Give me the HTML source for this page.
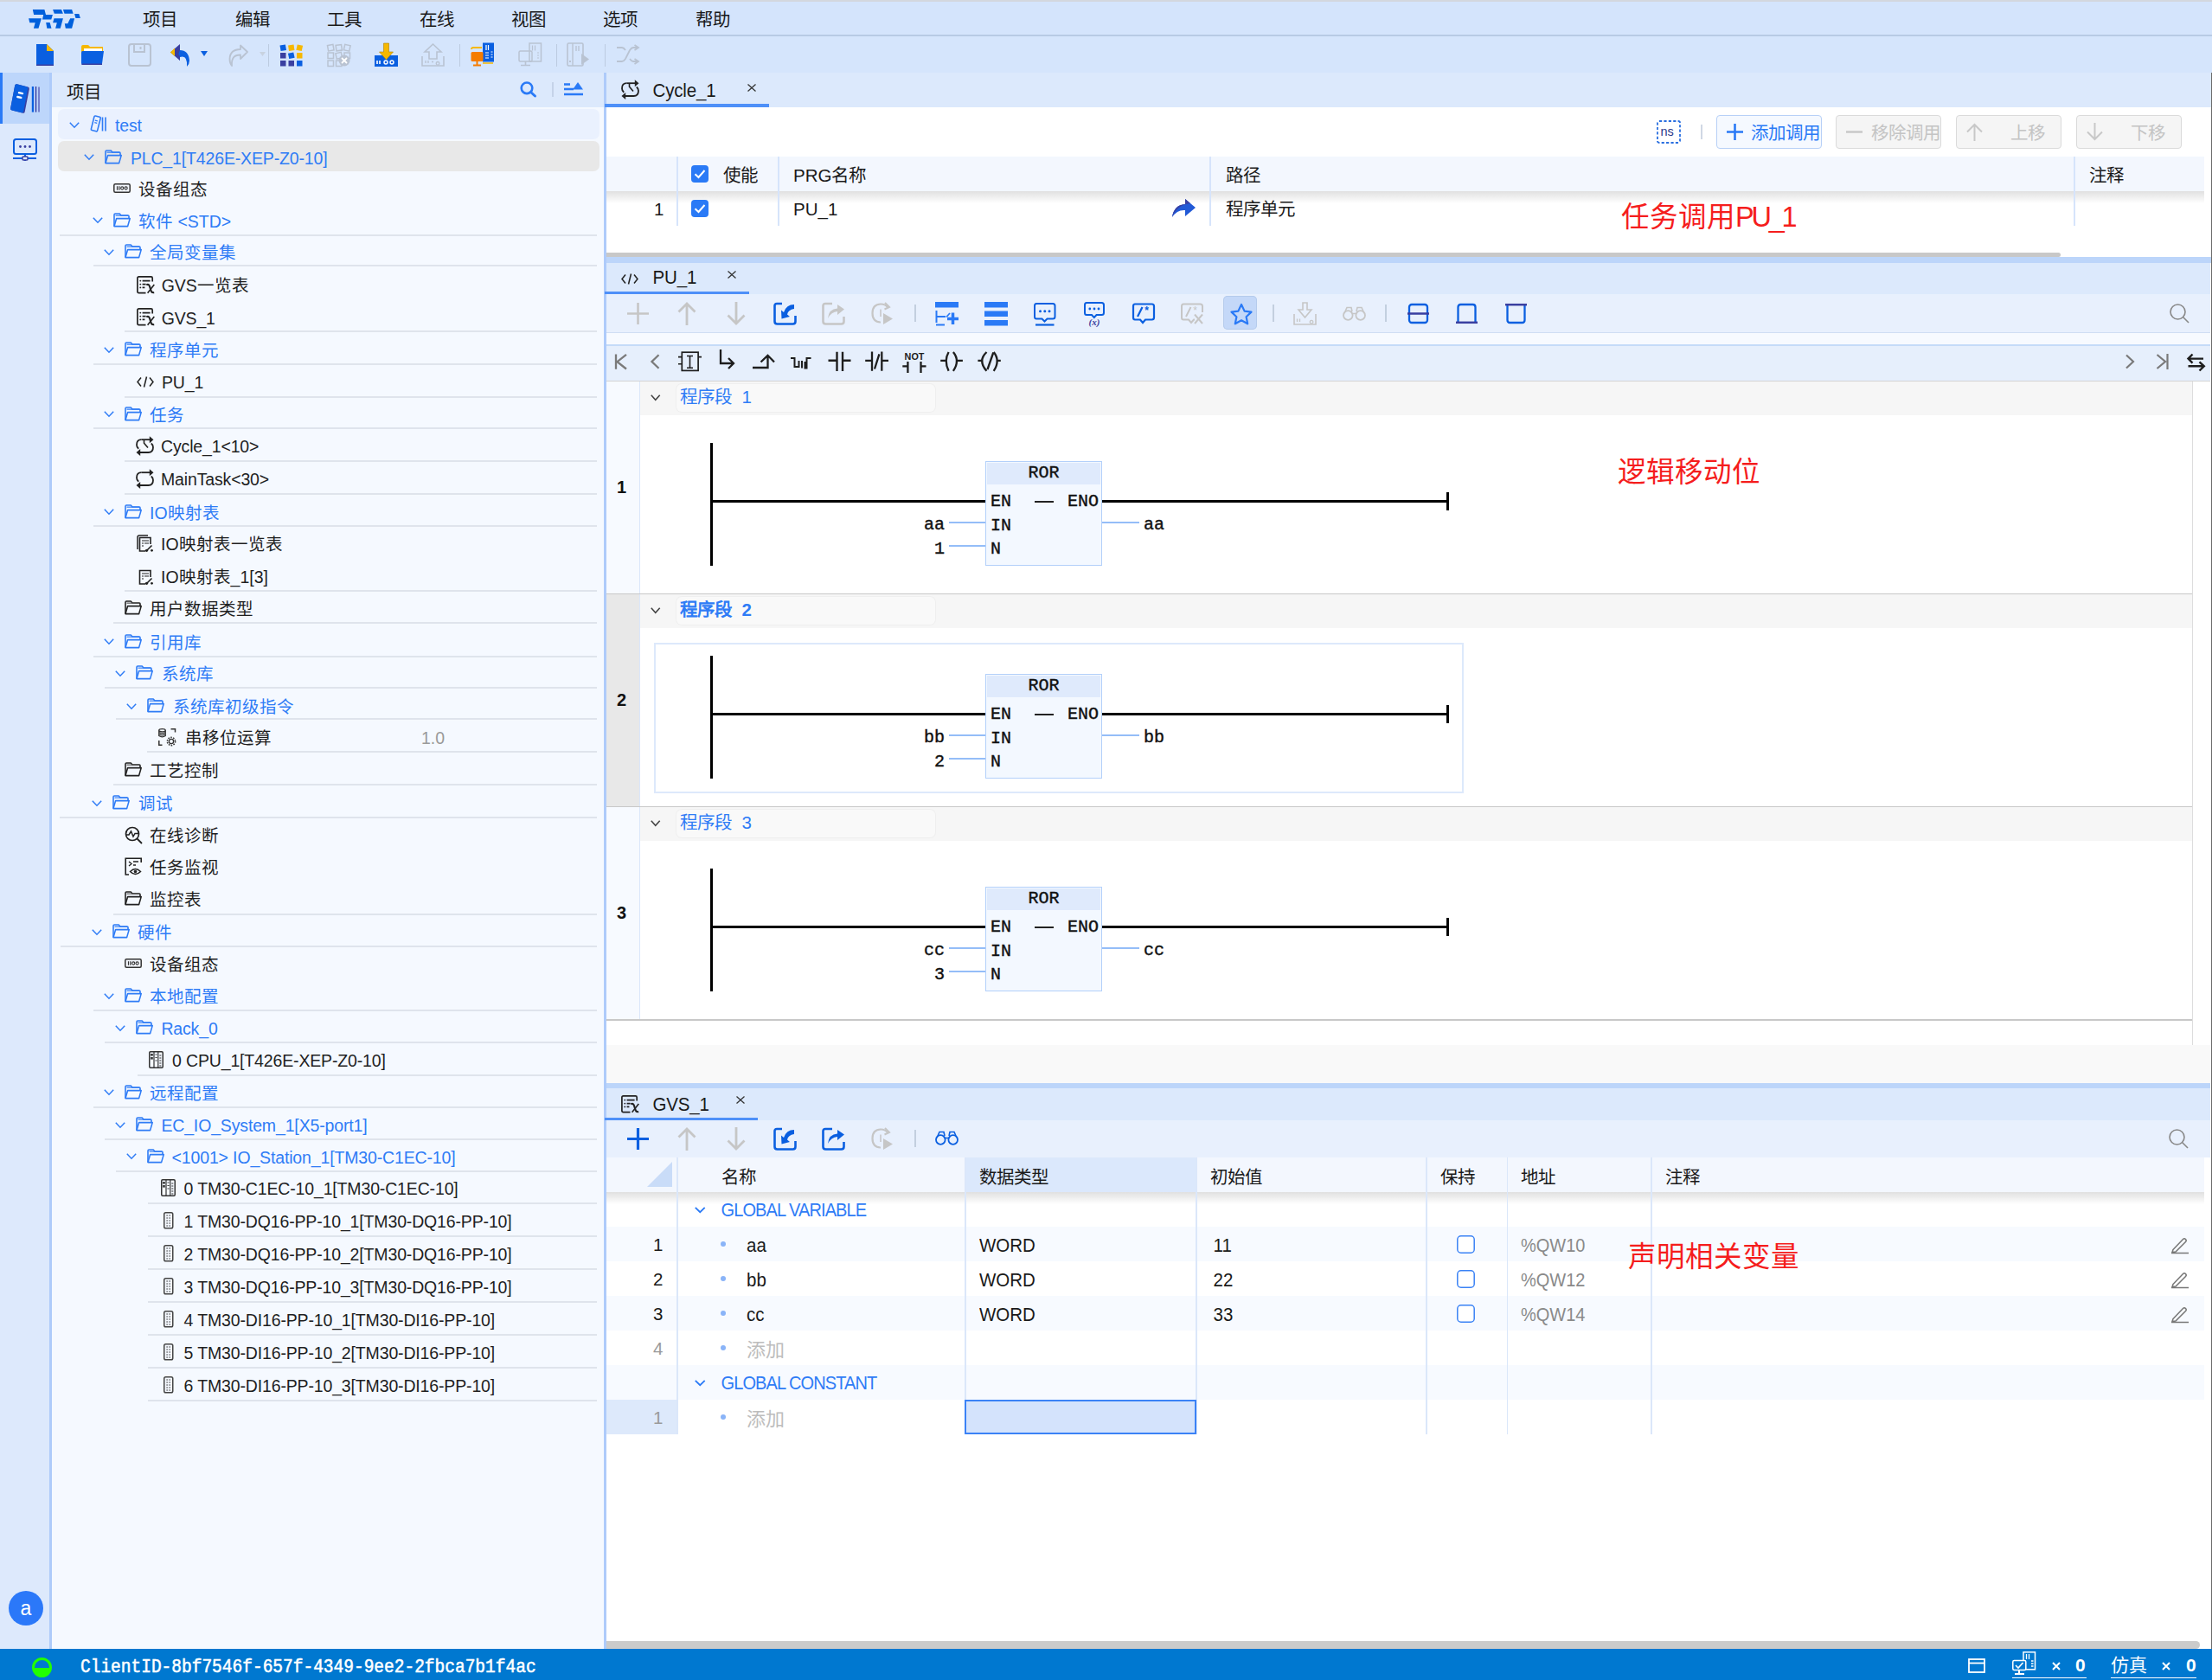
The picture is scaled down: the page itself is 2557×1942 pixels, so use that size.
<!DOCTYPE html>
<html lang="zh-CN">
<head>
<meta charset="utf-8">
<style>
*{box-sizing:border-box;margin:0;padding:0}
html,body{width:2557px;height:1942px;overflow:hidden}
body{position:relative;background:#f5f9ff;font-family:"Liberation Sans",sans-serif;color:#1a1a1a}
.a{position:absolute}
.t{position:absolute;white-space:nowrap;line-height:1}
svg{position:absolute;overflow:visible}
.mono{font-family:"Liberation Mono",monospace}
</style>
</head>
<body>
<div class="a" style="left:0;top:0;width:2557px;height:42px;background:#d4e4fc;border-top:2px solid #d3d7de;border-bottom:2px solid #b8cae4"></div>
<svg style="left:0;top:0" width="100" height="40" viewBox="0 0 100 40"><g fill="#0060dc"><polygon points="37.8,11.1 51.4,11.1 53.0,16.9 60.9,17.1 59.3,22.6 49.0,22.6 50.2,16.9 39.1,16.9"/><polygon points="33.1,21.2 47.9,21.2 44.5,32.7 38.9,32.7 40.7,26.3 34.3,26.3"/><polygon points="53.2,26.1 57.6,26.1 59.5,32.7 54.3,32.7"/><polygon points="61.1,11.1 71.0,11.1 72.9,15.8 62.8,15.8"/><polygon points="62.5,21.2 72.9,21.2 69.8,32.7 64.1,32.7 65.8,26.3 61.1,26.3"/><polygon points="72.9,11.1 83.1,11.1 84.6,15.8 74.5,15.8"/><polygon points="86.1,16.1 91.3,16.1 92.9,20.9 87.5,20.9"/><polygon points="81.2,21.2 86.1,21.2 83.1,32.7 75.8,32.7 74.8,27.2 78.3,27.2"/></g></svg>
<div class="t" style="left:165px;top:13px;font-size:20.5px;color:#1a1a1a">项目</div>
<div class="t" style="left:272px;top:13px;font-size:20.5px;color:#1a1a1a">编辑</div>
<div class="t" style="left:378px;top:13px;font-size:20.5px;color:#1a1a1a">工具</div>
<div class="t" style="left:485px;top:13px;font-size:20.5px;color:#1a1a1a">在线</div>
<div class="t" style="left:591px;top:13px;font-size:20.5px;color:#1a1a1a">视图</div>
<div class="t" style="left:697px;top:13px;font-size:20.5px;color:#1a1a1a">选项</div>
<div class="t" style="left:804px;top:13px;font-size:20.5px;color:#1a1a1a">帮助</div>
<div class="a" style="left:0;top:42px;width:2557px;height:42px;background:#d5e5fc"></div>
<svg style="left:41px;top:50px" width="22" height="27" viewBox="0 0 22 27" ><path d="M1 1H13L21 9V26H1Z" fill="#0a5fe0"/><path d="M13 1L21 9H13Z" fill="#f6b800"/><path d="M1 24.5H21V26H1Z" fill="#3a3fa0"/></svg>
<svg style="left:93px;top:51px" width="28" height="25" viewBox="0 0 28 25" ><path d="M1 3Q1 1 3 1H9L11 3H26V10H1Z" fill="#f6b800"/><path d="M4 5H25V9H4Z" fill="#fff"/><path d="M2.5 8H27L25 22.5Q24.7 24 23 24H3Q1 24 1 22V10Q1 8 2.5 8Z" fill="#0a5fe0"/><path d="M1.5 22.5H25V24H1.5Z" fill="#3a3fa0"/></svg>
<svg style="left:148px;top:50px" width="27" height="27" viewBox="0 0 27 27" ><rect x="1" y="1" width="25" height="25" rx="3" fill="none" stroke="#b9c3d2" stroke-width="2"/><path d="M7 1.5V10H19V1.5" fill="none" stroke="#b9c3d2" stroke-width="2"/><path d="M14.5 4V7" stroke="#b9c3d2" stroke-width="2"/></svg>
<svg style="left:196px;top:50px" width="24" height="27" viewBox="0 0 24 27" ><path d="M7.5 13Q7.5 8 12 8Q22 8 23 20Q23 24 20 27Q21 13 12 16V20Z" fill="#0a5fe0"/><path d="M12 1L1 10.5L12 20V15Q9 13 12 8Z" fill="#3a3fa0"/><path d="M6 5.5L1 10.5L6 15Z" fill="#f6b800"/></svg>
<svg style="left:232px;top:59px" width="8" height="6" viewBox="0 0 8 6" ><path d="M0 0H8L4 6Z" fill="#0a5fe0"/></svg>
<svg style="left:264px;top:51px" width="24" height="26" viewBox="0 0 24 26" ><path d="M22 9L14 1.5V6Q2 6 1.5 17Q1.5 22 4 25Q3 12 14 12.5V17Z" fill="none" stroke="#b9c3d2" stroke-width="1.8" stroke-linejoin="round"/></svg>
<svg style="left:300px;top:60px" width="7" height="5" viewBox="0 0 7 5" ><path d="M0 0H7L3.5 5Z" fill="#c8d2e0"/></svg>
<div class="a" style="left:310px;top:51px;width:1.2px;height:26px;background:#bccbe0;"></div>
<svg style="left:323px;top:50px" width="27" height="27" viewBox="0 0 27 27" ><rect x="1.0" y="2" width="6.5" height="6.5" fill="#0a5fe0" transform="rotate(-10 4.2 5.2)"/><rect x="10.5" y="2" width="6.5" height="6.5" fill="#f6b800" transform="rotate(-8 13.7 5.2)"/><rect x="20.0" y="2" width="6.5" height="6.5" fill="#f6b800" transform="rotate(12 23.2 5.2)"/><rect x="1.0" y="11" width="6.5" height="6.5" fill="#3a3fa0" transform="rotate(0 4.2 14.2)"/><rect x="10.5" y="11" width="6.5" height="6.5" fill="#0a5fe0" transform="rotate(-12 13.7 14.2)"/><rect x="20.0" y="11" width="6.5" height="6.5" fill="#f6b800" transform="rotate(0 23.2 14.2)"/><rect x="1.0" y="20" width="6.5" height="6.5" fill="#3a3fa0" transform="rotate(0 4.2 23.2)"/><rect x="10.5" y="20" width="6.5" height="6.5" fill="#3a3fa0" transform="rotate(0 13.7 23.2)"/><rect x="20.0" y="20" width="6.5" height="6.5" fill="#0a5fe0" transform="rotate(0 23.2 23.2)"/></svg>
<svg style="left:378px;top:50px" width="27" height="27" viewBox="0 0 27 27" ><rect x="1.0" y="2" width="6.5" height="6.5" fill="none" stroke="#b9c3d2" stroke-width="1.5" transform="rotate(-10 4.2 5.2)"/><rect x="10.5" y="2" width="6.5" height="6.5" fill="none" stroke="#b9c3d2" stroke-width="1.5" transform="rotate(-8 13.7 5.2)"/><rect x="20.0" y="2" width="6.5" height="6.5" fill="none" stroke="#b9c3d2" stroke-width="1.5" transform="rotate(12 23.2 5.2)"/><rect x="1.0" y="11" width="6.5" height="6.5" fill="none" stroke="#b9c3d2" stroke-width="1.5" transform="rotate(0 4.2 14.2)"/><rect x="10.5" y="11" width="6.5" height="6.5" fill="none" stroke="#b9c3d2" stroke-width="1.5" transform="rotate(-12 13.7 14.2)"/><rect x="20.0" y="11" width="6.5" height="6.5" fill="none" stroke="#b9c3d2" stroke-width="1.5" transform="rotate(0 23.2 14.2)"/><rect x="1.0" y="20" width="6.5" height="6.5" fill="none" stroke="#b9c3d2" stroke-width="1.5" transform="rotate(0 4.2 23.2)"/><rect x="10.5" y="20" width="6.5" height="6.5" fill="none" stroke="#b9c3d2" stroke-width="1.5" transform="rotate(0 13.7 23.2)"/><circle cx="20" cy="20" r="6.5" fill="#b9c3d2"/><path d="M17 17L23 23M23 17L17 23" stroke="#fff" stroke-width="1.8"/></svg>
<svg style="left:433px;top:50px" width="27" height="27" viewBox="0 0 27 27" ><rect x="0" y="14" width="27" height="13" fill="#0a5fe0"/><path d="M3 20v4M6 20v4" stroke="#fff" stroke-width="1.6"/><circle cx="13" cy="22" r="2" fill="none" stroke="#fff" stroke-width="1.4"/><circle cx="20" cy="22" r="2" fill="none" stroke="#fff" stroke-width="1.4"/><path d="M10.5 0H16.5V10H21.5L13.5 19L5.5 10H10.5Z" fill="#f6b800" stroke="#b08000" stroke-width="0.6"/></svg>
<svg style="left:487px;top:50px" width="27" height="27" viewBox="0 0 27 27" ><path d="M1 15V26H26V15" fill="none" stroke="#b9c3d2" stroke-width="1.6"/><path d="M13.5 1L4 10H9V18H18V10H23Z" fill="none" stroke="#b9c3d2" stroke-width="1.6"/><path d="M5 20v3M8 20v3M12 21.5h2M19 21.5a1.8 1.8 0 1 0 .1 0" fill="none" stroke="#b9c3d2" stroke-width="1.3"/></svg>
<div class="a" style="left:531px;top:51px;width:1.2px;height:26px;background:#bccbe0;"></div>
<svg style="left:544px;top:49px" width="28" height="28" viewBox="0 0 28 28" ><rect x="14" y="0.5" width="13" height="22" fill="#0a5fe0"/><path d="M18 3v6M20.5 3v6M23.5 11h2M23.5 14h2M23.5 17h2M17 12h4M17 15h4M17 18h4" stroke="#fff" stroke-width="1.2"/><path d="M1 8Q1 6 3 6H13" fill="none" stroke="#f6b800" stroke-width="1.8"/><rect x="0.5" y="11" width="14" height="11" rx="1.5" fill="#f57c00"/><path d="M7.5 22V26M3 26.5H12" stroke="#f57c00" stroke-width="2"/><path d="M14 24H26" stroke="#f6b800" stroke-width="1.5"/></svg>
<svg style="left:599px;top:49px" width="28" height="28" viewBox="0 0 28 28" ><rect x="13" y="1" width="13.5" height="21" fill="none" stroke="#b9c3d2" stroke-width="1.5"/><path d="M16.5 3.5v6M19.5 3.5v6M22 12h2M22 15h2M22 18h2" stroke="#b9c3d2" stroke-width="1.2"/><rect x="1" y="10" width="15" height="12" rx="1.5" fill="none" stroke="#b9c3d2" stroke-width="1.5"/><path d="M8.5 22V26M3 26.5H14" stroke="#b9c3d2" stroke-width="1.6"/></svg>
<div class="a" style="left:642.5px;top:51px;width:1.2px;height:26px;background:#bccbe0;"></div>
<svg style="left:655px;top:49px" width="27" height="28" viewBox="0 0 27 28" ><rect x="1" y="1" width="18" height="26" rx="1.5" fill="none" stroke="#b9c3d2" stroke-width="1.6"/><path d="M7 1v26" stroke="#b9c3d2" stroke-width="1.4"/><path d="M11 4v6M14 4v6" stroke="#b9c3d2" stroke-width="1.3"/><rect x="3" y="21" width="2" height="2" fill="#b9c3d2"/><path d="M17 13L26 19.5L17 26Z" fill="#b9c3d2"/></svg>
<div class="a" style="left:699px;top:51px;width:1.2px;height:26px;background:#bccbe0;"></div>
<svg style="left:712px;top:52px" width="27" height="22" viewBox="0 0 27 22" ><path d="M1 19H7Q9 19 11 16L16 6Q18 3 20 3H25M1 3H7Q9 3 11 6M16 16Q18 19 20 19H25" fill="none" stroke="#b9c3d2" stroke-width="1.8"/><path d="M21.5 0L26 3L21.5 6M21.5 16L26 19L21.5 22" fill="none" stroke="#b9c3d2" stroke-width="1.8"/></svg>
<div class="a" style="left:0;top:84px;width:57px;height:1822px;background:#dde9fc"></div>
<div class="a" style="left:0;top:84px;width:57px;height:59px;background:#bdd6fb"></div>
<div class="a" style="left:0;top:84px;width:3px;height:59px;background:#2a7af6"></div>
<div class="a" style="left:57px;top:84px;width:3px;height:1822px;background:#aecbfa"></div>
<svg style="left:0;top:0" width="60" height="140" viewBox="0 0 60 140"><path d="M19.5 97.2Q17.6 96.8 17.2 98.8L12.2 125Q11.8 127 13.8 127.5L26.5 130.7Q28.3 131.1 28.7 129.2L33.8 103Q34.2 101 32.3 100.6Z" fill="#3a3fa0"/><path d="M19.5 97.2Q17.6 96.8 17.2 98.8L12.2 125Q11.8 127 13.8 127.5L25 130.3Q26.8 130.7 27.2 128.8L32.2 102.6Q32.6 100.6 30.8 100.2Z" fill="#0a5fe0"/><path d="M22 107.2L26 108.1M20.3 112L24.3 112.9" stroke="#fff" stroke-width="2.4" stroke-linecap="round"/><path d="M37.9 100V129.6" stroke="#0a5fe0" stroke-width="2.2"/><path d="M41.5 100V129.6" stroke="#3a3fa0" stroke-width="1.5"/><path d="M45 100.5V129.6" stroke="#7580cc" stroke-width="2"/></svg>
<svg style="left:15px;top:160px" width="28" height="29" viewBox="0 0 28 29" ><rect x="1" y="1" width="26" height="17" rx="2.5" fill="none" stroke="#0a5fe0" stroke-width="2"/><circle cx="8.5" cy="9.5" r="1.4" fill="#3a3fa0"/><circle cx="14" cy="9.5" r="1.4" fill="#3a3fa0"/><circle cx="19.5" cy="9.5" r="1.4" fill="#3a3fa0"/><path d="M14 18V26M0 23H27" stroke="#0a5fe0" stroke-width="2"/><rect x="11" y="21" width="6" height="4" rx="1" fill="#dde9fc" stroke="#3a3fa0" stroke-width="1.5"/></svg>
<div class="a" style="left:10px;top:1839px;width:40px;height:40px;border-radius:50%;background:#2b78f9"></div>
<div class="t" style="left:10px;top:1848px;width:40px;text-align:center;font-size:23px;color:#fff">a</div>
<div class="a" style="left:60px;top:84px;width:638px;height:40px;background:#dce9fc"></div>
<div class="t" style="left:77px;top:97px;font-size:20.5px">项目</div>
<div class="a" style="left:60px;top:124px;width:638px;height:1782px;background:#f5f9ff"></div>
<div class="a" style="left:698px;top:84px;width:3px;height:1822px;background:#aecbfa"></div>
<svg style="left:601px;top:94px" width="21" height="18" viewBox="0 0 21 18" ><circle cx="8" cy="7.8" r="6.3" fill="none" stroke="#2a7af6" stroke-width="2.6"/><path d="M12.5 12.5L17.5 17" stroke="#2a7af6" stroke-width="3" stroke-linecap="round"/></svg>
<div class="a" style="left:638px;top:95px;width:1.5px;height:17px;background:#c5d3e8;"></div>
<svg style="left:652px;top:94px" width="22" height="18" viewBox="0 0 22 18" ><path d="M0 3.5h7M0 9h11M0 15h22" stroke="#2a7af6" stroke-width="2.4"/><path d="M10 9.5L16 1L22 9.5Z" fill="#2a7af6"/></svg>
<div class="a" style="left:67px;top:126px;width:626px;height:35px;border-radius:7px;background:#eaf1fe"></div>
<div class="a" style="left:67px;top:163px;width:626px;height:35px;border-radius:7px;background:#e8e8e8"></div>
<svg style="left:80px;top:140.5px" width="12" height="7" viewBox="0 0 12 7" ><polyline points="0.8,0.8 6.0,6.2 11.2,0.8" fill="none" stroke="#2f7cf6" stroke-width="1.5"/></svg>
<svg style="left:105px;top:133px" width="19" height="21" viewBox="0 0 19 21" ><g transform="rotate(14 6 10)"><rect x="2" y="1.5" width="7.5" height="17" rx="1.2" fill="none" stroke="#2f7cf6" stroke-width="1.6"/><path d="M4 6.5h3M4 9h3" stroke="#2f7cf6" stroke-width="1.3"/></g><path d="M13.5 2.5V18.5M17 2.5V18.5" stroke="#2f7cf6" stroke-width="1.6"/></svg>
<div class="t" style="left:133px;top:136.0px;font-size:19.5px;color:#2f7cf6;letter-spacing:-0.15px;transform:scaleY(1.08);transform-origin:0 85%">test</div>
<svg style="left:96.6px;top:178.0px" width="12" height="7" viewBox="0 0 12 7" ><polyline points="0.8,0.8 6.0,6.2 11.2,0.8" fill="none" stroke="#2f7cf6" stroke-width="1.5"/></svg>
<svg style="left:120.8px;top:172.5px" width="20" height="17" viewBox="0 0 20 17" ><path d="M1 15.6V2.2Q1 1 2.2 1H7.2L9 3H17Q18 3 18 4V6.2" fill="none" stroke="#2f7cf6" stroke-width="1.6" stroke-linejoin="round"/><path d="M2.5 3.2H17.2" stroke="#2f7cf6" stroke-width="1.6" opacity="0.75"/><path d="M1 15.6L3.6 6.6H19.2L16.6 15.6Z" fill="none" stroke="#2f7cf6" stroke-width="1.6" stroke-linejoin="round"/></svg>
<div class="t" style="left:150.9px;top:173.5px;font-size:19.5px;color:#2f7cf6;letter-spacing:-0.15px;transform:scaleY(1.08);transform-origin:0 85%">PLC_1[T426E-XEP-Z0-10]</div>
<svg style="left:130.5px;top:212px" width="20" height="11" viewBox="0 0 20 11" ><rect x="0.8" y="0.8" width="18.4" height="9.4" rx="1.5" fill="none" stroke="#333" stroke-width="1.5"/><path d="M4.5 3.3v4.4M6.8 3.3v4.4" stroke="#333" stroke-width="1.2"/><circle cx="10.2" cy="5.5" r="1.6" fill="none" stroke="#333" stroke-width="1.1"/><circle cx="14.6" cy="5.5" r="1.6" fill="none" stroke="#333" stroke-width="1.1"/></svg>
<div class="t" style="left:160.4px;top:210.0px;font-size:19.5px;color:#1f1f1f;">设备组态</div>
<svg style="left:106.6px;top:251.2px" width="12" height="7" viewBox="0 0 12 7" ><polyline points="0.8,0.8 6.0,6.2 11.2,0.8" fill="none" stroke="#2f7cf6" stroke-width="1.5"/></svg>
<svg style="left:130.8px;top:245.7px" width="20" height="17" viewBox="0 0 20 17" ><path d="M1 15.6V2.2Q1 1 2.2 1H7.2L9 3H17Q18 3 18 4V6.2" fill="none" stroke="#2f7cf6" stroke-width="1.6" stroke-linejoin="round"/><path d="M2.5 3.2H17.2" stroke="#2f7cf6" stroke-width="1.6" opacity="0.75"/><path d="M1 15.6L3.6 6.6H19.2L16.6 15.6Z" fill="none" stroke="#2f7cf6" stroke-width="1.6" stroke-linejoin="round"/></svg>
<div class="t" style="left:160px;top:246.7px;font-size:19.5px;color:#2f7cf6;">软件 &lt;STD&gt;</div>
<div class="a" style="left:69px;top:271px;width:621px;height:1.5px;background:#dfe4ec"></div>
<svg style="left:119.6px;top:287.5px" width="12" height="7" viewBox="0 0 12 7" ><polyline points="0.8,0.8 6.0,6.2 11.2,0.8" fill="none" stroke="#2f7cf6" stroke-width="1.5"/></svg>
<svg style="left:144px;top:282px" width="20" height="17" viewBox="0 0 20 17" ><path d="M1 15.6V2.2Q1 1 2.2 1H7.2L9 3H17Q18 3 18 4V6.2" fill="none" stroke="#2f7cf6" stroke-width="1.6" stroke-linejoin="round"/><path d="M2.5 3.2H17.2" stroke="#2f7cf6" stroke-width="1.6" opacity="0.75"/><path d="M1 15.6L3.6 6.6H19.2L16.6 15.6Z" fill="none" stroke="#2f7cf6" stroke-width="1.6" stroke-linejoin="round"/></svg>
<div class="t" style="left:173px;top:283.0px;font-size:19.5px;color:#2f7cf6;">全局变量集</div>
<div class="a" style="left:107.6px;top:306px;width:582.4px;height:1.5px;background:#dfe4ec"></div>
<svg style="left:157.6px;top:318.5px" width="20" height="20" viewBox="0 0 20 20" ><path d="M10.5 19.6H2.5Q0.9 19.6 0.9 18V2.5Q0.9 0.9 2.5 0.9H16.6Q18.2 0.9 18.2 2.5V6.6" fill="none" stroke="#222" stroke-width="1.7"/><circle cx="4.3" cy="5.6" r="0.95" fill="#222"/><circle cx="4.3" cy="9.6" r="0.95" fill="#222"/><circle cx="4.3" cy="13.4" r="0.95" fill="#222"/><path d="M6.6 5.6H15.6M6.6 9.6H10.6M6.6 13.4H9.4" stroke="#222" stroke-width="1.6"/><path d="M11.3 10.2Q14 9 14.9 11.8L16.7 17.3Q17.4 19.6 20.2 19.1" fill="none" stroke="#222" stroke-width="2.1"/><path d="M20.3 10L12.6 19.7" stroke="#222" stroke-width="1.6"/></svg>
<div class="t" style="left:186.7px;top:321.0px;font-size:19.5px;color:#1f1f1f;">GVS一览表</div>
<svg style="left:157.6px;top:356.0px" width="20" height="20" viewBox="0 0 20 20" ><path d="M10.5 19.6H2.5Q0.9 19.6 0.9 18V2.5Q0.9 0.9 2.5 0.9H16.6Q18.2 0.9 18.2 2.5V6.6" fill="none" stroke="#222" stroke-width="1.7"/><circle cx="4.3" cy="5.6" r="0.95" fill="#222"/><circle cx="4.3" cy="9.6" r="0.95" fill="#222"/><circle cx="4.3" cy="13.4" r="0.95" fill="#222"/><path d="M6.6 5.6H15.6M6.6 9.6H10.6M6.6 13.4H9.4" stroke="#222" stroke-width="1.6"/><path d="M11.3 10.2Q14 9 14.9 11.8L16.7 17.3Q17.4 19.6 20.2 19.1" fill="none" stroke="#222" stroke-width="2.1"/><path d="M20.3 10L12.6 19.7" stroke="#222" stroke-width="1.6"/></svg>
<div class="t" style="left:186.7px;top:358.5px;font-size:19.5px;color:#1f1f1f;letter-spacing:-0.15px;transform:scaleY(1.08);transform-origin:0 85%">GVS_1</div>
<div class="a" style="left:144px;top:382px;width:546px;height:1.5px;background:#dfe4ec"></div>
<svg style="left:119.6px;top:400.9px" width="12" height="7" viewBox="0 0 12 7" ><polyline points="0.8,0.8 6.0,6.2 11.2,0.8" fill="none" stroke="#2f7cf6" stroke-width="1.5"/></svg>
<svg style="left:144px;top:395.4px" width="20" height="17" viewBox="0 0 20 17" ><path d="M1 15.6V2.2Q1 1 2.2 1H7.2L9 3H17Q18 3 18 4V6.2" fill="none" stroke="#2f7cf6" stroke-width="1.6" stroke-linejoin="round"/><path d="M2.5 3.2H17.2" stroke="#2f7cf6" stroke-width="1.6" opacity="0.75"/><path d="M1 15.6L3.6 6.6H19.2L16.6 15.6Z" fill="none" stroke="#2f7cf6" stroke-width="1.6" stroke-linejoin="round"/></svg>
<div class="t" style="left:173px;top:396.4px;font-size:19.5px;color:#2f7cf6;">程序单元</div>
<div class="a" style="left:107.6px;top:420px;width:582.4px;height:1.5px;background:#dfe4ec"></div>
<svg style="left:157.6px;top:434.5px" width="20" height="13" viewBox="0 0 20 13" ><polyline points="5,1.5 1,6.5 5,11.5" fill="none" stroke="#222" stroke-width="1.5"/><polyline points="15,1.5 19,6.5 15,11.5" fill="none" stroke="#222" stroke-width="1.5"/><path d="M11.5 0.5L8.5 12.5" stroke="#222" stroke-width="1.5"/></svg>
<div class="t" style="left:187px;top:433.0px;font-size:19.5px;color:#1f1f1f;letter-spacing:-0.15px;transform:scaleY(1.08);transform-origin:0 85%">PU_1</div>
<div class="a" style="left:144px;top:458px;width:546px;height:1.5px;background:#dfe4ec"></div>
<svg style="left:119.5px;top:475.1px" width="12" height="7" viewBox="0 0 12 7" ><polyline points="0.8,0.8 6.0,6.2 11.2,0.8" fill="none" stroke="#2f7cf6" stroke-width="1.5"/></svg>
<svg style="left:144px;top:469.6px" width="20" height="17" viewBox="0 0 20 17" ><path d="M1 15.6V2.2Q1 1 2.2 1H7.2L9 3H17Q18 3 18 4V6.2" fill="none" stroke="#2f7cf6" stroke-width="1.6" stroke-linejoin="round"/><path d="M2.5 3.2H17.2" stroke="#2f7cf6" stroke-width="1.6" opacity="0.75"/><path d="M1 15.6L3.6 6.6H19.2L16.6 15.6Z" fill="none" stroke="#2f7cf6" stroke-width="1.6" stroke-linejoin="round"/></svg>
<div class="t" style="left:173px;top:470.6px;font-size:19.5px;color:#2f7cf6;">任务</div>
<div class="a" style="left:108px;top:494px;width:582px;height:1.5px;background:#dfe4ec"></div>
<svg style="left:157px;top:505.5px" width="21" height="21" viewBox="0 0 21 21" ><path d="M6.5 2.2H17" fill="none" stroke="#222" stroke-width="1.8"/><path d="M6.5 2.2Q1 2.2 1 8.2Q1 11 3.2 12.8" fill="none" stroke="#222" stroke-width="1.8"/><path d="M15.8 -1.8L20.5 2.2L15.8 6.2Z" fill="#222"/><path d="M4.5 17H14.5Q20 17 20 11Q20 8.2 17.8 6.5" fill="none" stroke="#222" stroke-width="1.8"/><path d="M5.2 13L0.5 17L5.2 21Z" fill="#222"/><path d="M9.5 3V6.2L14 11.5" fill="none" stroke="#222" stroke-width="1.6"/></svg>
<div class="t" style="left:186px;top:507.0px;font-size:19.5px;color:#1f1f1f;letter-spacing:-0.15px;transform:scaleY(1.08);transform-origin:0 85%">Cycle_1&lt;10&gt;</div>
<div class="a" style="left:144px;top:532px;width:546px;height:1.5px;background:#dfe4ec"></div>
<svg style="left:157px;top:543.5px" width="21" height="21" viewBox="0 0 21 21" ><path d="M6.5 2.2H17" fill="none" stroke="#222" stroke-width="1.8"/><path d="M6.5 2.2Q1 2.2 1 8.2Q1 11 3.2 12.8" fill="none" stroke="#222" stroke-width="1.8"/><path d="M15.8 -1.8L20.5 2.2L15.8 6.2Z" fill="#222"/><path d="M4.5 17H14.5Q20 17 20 11Q20 8.2 17.8 6.5" fill="none" stroke="#222" stroke-width="1.8"/><path d="M5.2 13L0.5 17L5.2 21Z" fill="#222"/></svg>
<div class="t" style="left:186px;top:545.0px;font-size:19.5px;color:#1f1f1f;letter-spacing:-0.15px;transform:scaleY(1.08);transform-origin:0 85%">MainTask&lt;30&gt;</div>
<div class="a" style="left:144px;top:570px;width:546px;height:1.5px;background:#dfe4ec"></div>
<svg style="left:119.5px;top:588.0px" width="12" height="7" viewBox="0 0 12 7" ><polyline points="0.8,0.8 6.0,6.2 11.2,0.8" fill="none" stroke="#2f7cf6" stroke-width="1.5"/></svg>
<svg style="left:144px;top:582.5px" width="20" height="17" viewBox="0 0 20 17" ><path d="M1 15.6V2.2Q1 1 2.2 1H7.2L9 3H17Q18 3 18 4V6.2" fill="none" stroke="#2f7cf6" stroke-width="1.6" stroke-linejoin="round"/><path d="M2.5 3.2H17.2" stroke="#2f7cf6" stroke-width="1.6" opacity="0.75"/><path d="M1 15.6L3.6 6.6H19.2L16.6 15.6Z" fill="none" stroke="#2f7cf6" stroke-width="1.6" stroke-linejoin="round"/></svg>
<div class="t" style="left:173px;top:583.5px;font-size:19.5px;color:#2f7cf6;">IO映射表</div>
<div class="a" style="left:108px;top:607px;width:582px;height:1.5px;background:#dfe4ec"></div>
<svg style="left:158px;top:618px" width="19" height="20" viewBox="0 0 19 20" ><path d="M1 17V3Q1 1 3 1H13" fill="none" stroke="#222" stroke-width="1.5"/><path d="M10 19H3.5V3.5H16V11" fill="none" stroke="#222" stroke-width="1.6"/><path d="M6 7h8M6 10h2M9 10h5M6 13h2" stroke="#222" stroke-width="1.2"/><path d="M17.5 12.5L11.5 18.5" stroke="#222" stroke-width="1.6"/><circle cx="11.5" cy="18.3" r="1.6" fill="#222"/><circle cx="17.5" cy="18.3" r="1.4" fill="#222"/></svg>
<div class="t" style="left:186px;top:620.0px;font-size:19.5px;color:#1f1f1f;">IO映射表一览表</div>
<svg style="left:158px;top:656px" width="19" height="20" viewBox="0 0 19 20" ><path d="M10 19H3.5V3.5H16V11" fill="none" stroke="#222" stroke-width="1.6"/><path d="M6 7h8M6 10h2M9 10h5M6 13h2" stroke="#222" stroke-width="1.2"/><path d="M17.5 12.5L11.5 18.5" stroke="#222" stroke-width="1.6"/><circle cx="11.5" cy="18.3" r="1.6" fill="#222"/><circle cx="17.5" cy="18.3" r="1.4" fill="#222"/></svg>
<div class="t" style="left:186px;top:658.0px;font-size:19.5px;color:#1f1f1f;">IO映射表_1[3]</div>
<div class="a" style="left:144px;top:682px;width:546px;height:1.5px;background:#dfe4ec"></div>
<svg style="left:144px;top:694px" width="20" height="17" viewBox="0 0 20 17" ><path d="M1 15.6V2.2Q1 1 2.2 1H7.2L9 3H17Q18 3 18 4V6.2" fill="none" stroke="#222" stroke-width="1.6" stroke-linejoin="round"/><path d="M2.5 3.2H17.2" stroke="#555" stroke-width="1.6" opacity="0.75"/><path d="M1 15.6L3.6 6.6H19.2L16.6 15.6Z" fill="none" stroke="#222" stroke-width="1.6" stroke-linejoin="round"/></svg>
<div class="t" style="left:173px;top:695.0px;font-size:19.5px;color:#1f1f1f;">用户数据类型</div>
<div class="a" style="left:131px;top:719px;width:559px;height:1.5px;background:#dfe4ec"></div>
<svg style="left:119.5px;top:738.0px" width="12" height="7" viewBox="0 0 12 7" ><polyline points="0.8,0.8 6.0,6.2 11.2,0.8" fill="none" stroke="#2f7cf6" stroke-width="1.5"/></svg>
<svg style="left:144px;top:732.5px" width="20" height="17" viewBox="0 0 20 17" ><path d="M1 15.6V2.2Q1 1 2.2 1H7.2L9 3H17Q18 3 18 4V6.2" fill="none" stroke="#2f7cf6" stroke-width="1.6" stroke-linejoin="round"/><path d="M2.5 3.2H17.2" stroke="#2f7cf6" stroke-width="1.6" opacity="0.75"/><path d="M1 15.6L3.6 6.6H19.2L16.6 15.6Z" fill="none" stroke="#2f7cf6" stroke-width="1.6" stroke-linejoin="round"/></svg>
<div class="t" style="left:173px;top:733.5px;font-size:19.5px;color:#2f7cf6;">引用库</div>
<div class="a" style="left:108px;top:758px;width:582px;height:1.5px;background:#dfe4ec"></div>
<svg style="left:132.6px;top:774.5px" width="12" height="7" viewBox="0 0 12 7" ><polyline points="0.8,0.8 6.0,6.2 11.2,0.8" fill="none" stroke="#2f7cf6" stroke-width="1.5"/></svg>
<svg style="left:157px;top:769px" width="20" height="17" viewBox="0 0 20 17" ><path d="M1 15.6V2.2Q1 1 2.2 1H7.2L9 3H17Q18 3 18 4V6.2" fill="none" stroke="#2f7cf6" stroke-width="1.6" stroke-linejoin="round"/><path d="M2.5 3.2H17.2" stroke="#2f7cf6" stroke-width="1.6" opacity="0.75"/><path d="M1 15.6L3.6 6.6H19.2L16.6 15.6Z" fill="none" stroke="#2f7cf6" stroke-width="1.6" stroke-linejoin="round"/></svg>
<div class="t" style="left:186.6px;top:770.0px;font-size:19.5px;color:#2f7cf6;">系统库</div>
<div class="a" style="left:121px;top:794px;width:569px;height:1.5px;background:#dfe4ec"></div>
<svg style="left:145.7px;top:812.5px" width="12" height="7" viewBox="0 0 12 7" ><polyline points="0.8,0.8 6.0,6.2 11.2,0.8" fill="none" stroke="#2f7cf6" stroke-width="1.5"/></svg>
<svg style="left:170px;top:807px" width="20" height="17" viewBox="0 0 20 17" ><path d="M1 15.6V2.2Q1 1 2.2 1H7.2L9 3H17Q18 3 18 4V6.2" fill="none" stroke="#2f7cf6" stroke-width="1.6" stroke-linejoin="round"/><path d="M2.5 3.2H17.2" stroke="#2f7cf6" stroke-width="1.6" opacity="0.75"/><path d="M1 15.6L3.6 6.6H19.2L16.6 15.6Z" fill="none" stroke="#2f7cf6" stroke-width="1.6" stroke-linejoin="round"/></svg>
<div class="t" style="left:200.4px;top:808.0px;font-size:19.5px;color:#2f7cf6;">系统库初级指令</div>
<div class="a" style="left:134px;top:830px;width:556px;height:1.5px;background:#dfe4ec"></div>
<svg style="left:183px;top:841.5px" width="21" height="21" viewBox="0 0 21 21" ><ellipse cx="4.5" cy="2.2" rx="3.8" ry="1.6" fill="none" stroke="#333" stroke-width="1.2"/><path d="M0.7 2.2V8.6Q4.5 11 8.3 8.6V2.2M0.7 4.4Q4.5 6.8 8.3 4.4M0.7 6.6Q4.5 9 8.3 6.6" fill="none" stroke="#333" stroke-width="1.2"/><path d="M14.5 0.8H19.5V4.5M0.8 14V19.2H4.5" fill="none" stroke="#333" stroke-width="1.5"/><circle cx="15" cy="15" r="2.6" fill="none" stroke="#333" stroke-width="1.3"/><circle cx="15" cy="15" r="4.6" fill="none" stroke="#333" stroke-width="1.6" stroke-dasharray="1.6 1.3"/></svg>
<div class="t" style="left:213.5px;top:844.0px;font-size:19.5px;color:#1f1f1f;">串移位运算</div>
<div class="a" style="left:170px;top:868px;width:520px;height:1.5px;background:#dfe4ec"></div>
<svg style="left:144px;top:881px" width="20" height="17" viewBox="0 0 20 17" ><path d="M1 15.6V2.2Q1 1 2.2 1H7.2L9 3H17Q18 3 18 4V6.2" fill="none" stroke="#222" stroke-width="1.6" stroke-linejoin="round"/><path d="M2.5 3.2H17.2" stroke="#555" stroke-width="1.6" opacity="0.75"/><path d="M1 15.6L3.6 6.6H19.2L16.6 15.6Z" fill="none" stroke="#222" stroke-width="1.6" stroke-linejoin="round"/></svg>
<div class="t" style="left:173px;top:882.0px;font-size:19.5px;color:#1f1f1f;">工艺控制</div>
<div class="a" style="left:131px;top:906px;width:559px;height:1.5px;background:#dfe4ec"></div>
<svg style="left:106px;top:924.5px" width="12" height="7" viewBox="0 0 12 7" ><polyline points="0.8,0.8 6.0,6.2 11.2,0.8" fill="none" stroke="#2f7cf6" stroke-width="1.5"/></svg>
<svg style="left:130px;top:919px" width="20" height="17" viewBox="0 0 20 17" ><path d="M1 15.6V2.2Q1 1 2.2 1H7.2L9 3H17Q18 3 18 4V6.2" fill="none" stroke="#2f7cf6" stroke-width="1.6" stroke-linejoin="round"/><path d="M2.5 3.2H17.2" stroke="#2f7cf6" stroke-width="1.6" opacity="0.75"/><path d="M1 15.6L3.6 6.6H19.2L16.6 15.6Z" fill="none" stroke="#2f7cf6" stroke-width="1.6" stroke-linejoin="round"/></svg>
<div class="t" style="left:160px;top:920.0px;font-size:19.5px;color:#2f7cf6;">调试</div>
<div class="a" style="left:69px;top:944px;width:621px;height:1.5px;background:#dfe4ec"></div>
<svg style="left:143.7px;top:954.5px" width="21" height="21" viewBox="0 0 21 21" ><circle cx="9" cy="9" r="7.5" fill="none" stroke="#222" stroke-width="1.7"/><path d="M14.5 14.5L20 20" stroke="#222" stroke-width="1.8"/><polyline points="1.5,10 5,10 7.5,6 10,12 12,8.5 16.5,8.5" fill="none" stroke="#222" stroke-width="1.5"/></svg>
<div class="t" style="left:173.3px;top:957.0px;font-size:19.5px;color:#1f1f1f;">在线诊断</div>
<svg style="left:143.7px;top:991px" width="21" height="22" viewBox="0 0 21 22" ><path d="M5 20H1.2V1.2H19.2V6M1.2 10V14" fill="none" stroke="#222" stroke-width="1.6"/><path d="M5 5l3 2.5l-3 2.5M10 5h6M10 9h3" fill="none" stroke="#222" stroke-width="1.4"/><path d="M6.5 16.5q6-6 12 0q-6 6-12 0z" fill="none" stroke="#222" stroke-width="1.5"/><circle cx="12.5" cy="16.5" r="1.8" fill="#222"/></svg>
<div class="t" style="left:173.3px;top:994.0px;font-size:19.5px;color:#1f1f1f;">任务监视</div>
<svg style="left:143.7px;top:1030px" width="20" height="17" viewBox="0 0 20 17" ><path d="M1 15.6V2.2Q1 1 2.2 1H7.2L9 3H17Q18 3 18 4V6.2" fill="none" stroke="#222" stroke-width="1.6" stroke-linejoin="round"/><path d="M2.5 3.2H17.2" stroke="#555" stroke-width="1.6" opacity="0.75"/><path d="M1 15.6L3.6 6.6H19.2L16.6 15.6Z" fill="none" stroke="#222" stroke-width="1.6" stroke-linejoin="round"/></svg>
<div class="t" style="left:173.3px;top:1031.0px;font-size:19.5px;color:#1f1f1f;">监控表</div>
<div class="a" style="left:131px;top:1056px;width:559px;height:1.5px;background:#dfe4ec"></div>
<svg style="left:105.7px;top:1073.5px" width="12" height="7" viewBox="0 0 12 7" ><polyline points="0.8,0.8 6.0,6.2 11.2,0.8" fill="none" stroke="#2f7cf6" stroke-width="1.5"/></svg>
<svg style="left:130px;top:1068px" width="20" height="17" viewBox="0 0 20 17" ><path d="M1 15.6V2.2Q1 1 2.2 1H7.2L9 3H17Q18 3 18 4V6.2" fill="none" stroke="#2f7cf6" stroke-width="1.6" stroke-linejoin="round"/><path d="M2.5 3.2H17.2" stroke="#2f7cf6" stroke-width="1.6" opacity="0.75"/><path d="M1 15.6L3.6 6.6H19.2L16.6 15.6Z" fill="none" stroke="#2f7cf6" stroke-width="1.6" stroke-linejoin="round"/></svg>
<div class="t" style="left:159.3px;top:1069.0px;font-size:19.5px;color:#2f7cf6;">硬件</div>
<div class="a" style="left:69.7px;top:1093px;width:620.3px;height:1.5px;background:#dfe4ec"></div>
<svg style="left:144px;top:1108px" width="20" height="11" viewBox="0 0 20 11" ><rect x="0.8" y="0.8" width="18.4" height="9.4" rx="1.5" fill="none" stroke="#333" stroke-width="1.5"/><path d="M4.5 3.3v4.4M6.8 3.3v4.4" stroke="#333" stroke-width="1.2"/><circle cx="10.2" cy="5.5" r="1.6" fill="none" stroke="#333" stroke-width="1.1"/><circle cx="14.6" cy="5.5" r="1.6" fill="none" stroke="#333" stroke-width="1.1"/></svg>
<div class="t" style="left:173.3px;top:1106.0px;font-size:19.5px;color:#1f1f1f;">设备组态</div>
<svg style="left:119.6px;top:1147.5px" width="12" height="7" viewBox="0 0 12 7" ><polyline points="0.8,0.8 6.0,6.2 11.2,0.8" fill="none" stroke="#2f7cf6" stroke-width="1.5"/></svg>
<svg style="left:144px;top:1142px" width="20" height="17" viewBox="0 0 20 17" ><path d="M1 15.6V2.2Q1 1 2.2 1H7.2L9 3H17Q18 3 18 4V6.2" fill="none" stroke="#2f7cf6" stroke-width="1.6" stroke-linejoin="round"/><path d="M2.5 3.2H17.2" stroke="#2f7cf6" stroke-width="1.6" opacity="0.75"/><path d="M1 15.6L3.6 6.6H19.2L16.6 15.6Z" fill="none" stroke="#2f7cf6" stroke-width="1.6" stroke-linejoin="round"/></svg>
<div class="t" style="left:173.3px;top:1143.0px;font-size:19.5px;color:#2f7cf6;">本地配置</div>
<div class="a" style="left:108px;top:1167px;width:582px;height:1.5px;background:#dfe4ec"></div>
<svg style="left:133px;top:1184.5px" width="12" height="7" viewBox="0 0 12 7" ><polyline points="0.8,0.8 6.0,6.2 11.2,0.8" fill="none" stroke="#2f7cf6" stroke-width="1.5"/></svg>
<svg style="left:157px;top:1179px" width="20" height="17" viewBox="0 0 20 17" ><path d="M1 15.6V2.2Q1 1 2.2 1H7.2L9 3H17Q18 3 18 4V6.2" fill="none" stroke="#2f7cf6" stroke-width="1.6" stroke-linejoin="round"/><path d="M2.5 3.2H17.2" stroke="#2f7cf6" stroke-width="1.6" opacity="0.75"/><path d="M1 15.6L3.6 6.6H19.2L16.6 15.6Z" fill="none" stroke="#2f7cf6" stroke-width="1.6" stroke-linejoin="round"/></svg>
<div class="t" style="left:186.4px;top:1180.0px;font-size:19.5px;color:#2f7cf6;letter-spacing:-0.15px;transform:scaleY(1.08);transform-origin:0 85%">Rack_0</div>
<div class="a" style="left:120.5px;top:1204px;width:569.5px;height:1.5px;background:#dfe4ec"></div>
<svg style="left:172px;top:1215px" width="17" height="20" viewBox="0 0 17 20" ><rect x="0.75" y="0.75" width="15.5" height="18.5" rx="1.2" fill="none" stroke="#333" stroke-width="1.5"/><path d="M6 1v18M10.8 1v18" stroke="#333" stroke-width="1.2"/><rect x="2.2" y="3" width="2.6" height="2.6" fill="#333"/><rect x="2.2" y="7" width="2.6" height="2.6" fill="#333"/><path d="M7.5 4h2M7.5 7.5h2M7.5 11h2M12.3 5h2M12.3 8h2M12.3 11h2M12.3 14h2M12.3 17h2" stroke="#333" stroke-width="1.2"/></svg>
<div class="t" style="left:199px;top:1217.0px;font-size:19.5px;color:#1f1f1f;letter-spacing:-0.15px;transform:scaleY(1.08);transform-origin:0 85%">0 CPU_1[T426E-XEP-Z0-10]</div>
<div class="a" style="left:158.5px;top:1242px;width:531.5px;height:1.5px;background:#dfe4ec"></div>
<svg style="left:119.6px;top:1259.1px" width="12" height="7" viewBox="0 0 12 7" ><polyline points="0.8,0.8 6.0,6.2 11.2,0.8" fill="none" stroke="#2f7cf6" stroke-width="1.5"/></svg>
<svg style="left:144px;top:1253.6px" width="20" height="17" viewBox="0 0 20 17" ><path d="M1 15.6V2.2Q1 1 2.2 1H7.2L9 3H17Q18 3 18 4V6.2" fill="none" stroke="#2f7cf6" stroke-width="1.6" stroke-linejoin="round"/><path d="M2.5 3.2H17.2" stroke="#2f7cf6" stroke-width="1.6" opacity="0.75"/><path d="M1 15.6L3.6 6.6H19.2L16.6 15.6Z" fill="none" stroke="#2f7cf6" stroke-width="1.6" stroke-linejoin="round"/></svg>
<div class="t" style="left:173.3px;top:1254.6px;font-size:19.5px;color:#2f7cf6;">远程配置</div>
<div class="a" style="left:108px;top:1279px;width:582px;height:1.5px;background:#dfe4ec"></div>
<svg style="left:133px;top:1296.5px" width="12" height="7" viewBox="0 0 12 7" ><polyline points="0.8,0.8 6.0,6.2 11.2,0.8" fill="none" stroke="#2f7cf6" stroke-width="1.5"/></svg>
<svg style="left:157px;top:1291px" width="20" height="17" viewBox="0 0 20 17" ><path d="M1 15.6V2.2Q1 1 2.2 1H7.2L9 3H17Q18 3 18 4V6.2" fill="none" stroke="#2f7cf6" stroke-width="1.6" stroke-linejoin="round"/><path d="M2.5 3.2H17.2" stroke="#2f7cf6" stroke-width="1.6" opacity="0.75"/><path d="M1 15.6L3.6 6.6H19.2L16.6 15.6Z" fill="none" stroke="#2f7cf6" stroke-width="1.6" stroke-linejoin="round"/></svg>
<div class="t" style="left:186.4px;top:1292.0px;font-size:19.5px;color:#2f7cf6;letter-spacing:-0.15px;transform:scaleY(1.08);transform-origin:0 85%">EC_IO_System_1[X5-port1]</div>
<div class="a" style="left:120.5px;top:1316px;width:569.5px;height:1.5px;background:#dfe4ec"></div>
<svg style="left:145.8px;top:1333.1px" width="12" height="7" viewBox="0 0 12 7" ><polyline points="0.8,0.8 6.0,6.2 11.2,0.8" fill="none" stroke="#2f7cf6" stroke-width="1.5"/></svg>
<svg style="left:170px;top:1327.6px" width="20" height="17" viewBox="0 0 20 17" ><path d="M1 15.6V2.2Q1 1 2.2 1H7.2L9 3H17Q18 3 18 4V6.2" fill="none" stroke="#2f7cf6" stroke-width="1.6" stroke-linejoin="round"/><path d="M2.5 3.2H17.2" stroke="#2f7cf6" stroke-width="1.6" opacity="0.75"/><path d="M1 15.6L3.6 6.6H19.2L16.6 15.6Z" fill="none" stroke="#2f7cf6" stroke-width="1.6" stroke-linejoin="round"/></svg>
<div class="t" style="left:198.6px;top:1328.6px;font-size:19.5px;color:#2f7cf6;letter-spacing:-0.15px;transform:scaleY(1.08);transform-origin:0 85%">&lt;1001&gt; IO_Station_1[TM30-C1EC-10]</div>
<div class="a" style="left:134.4px;top:1353px;width:555.6px;height:1.5px;background:#dfe4ec"></div>
<svg style="left:186px;top:1363px" width="17" height="20" viewBox="0 0 17 20" ><rect x="0.75" y="0.75" width="15.5" height="18.5" rx="1.2" fill="none" stroke="#333" stroke-width="1.5"/><path d="M6 1v18M10.8 1v18" stroke="#333" stroke-width="1.2"/><rect x="2.2" y="3" width="2.6" height="2.6" fill="#333"/><rect x="2.2" y="7" width="2.6" height="2.6" fill="#333"/><path d="M7.5 4h2M7.5 7.5h2M7.5 11h2M12.3 5h2M12.3 8h2M12.3 11h2M12.3 14h2M12.3 17h2" stroke="#333" stroke-width="1.2"/></svg>
<div class="t" style="left:212.6px;top:1365.0px;font-size:19.5px;color:#1f1f1f;letter-spacing:-0.15px;transform:scaleY(1.08);transform-origin:0 85%">0 TM30-C1EC-10_1[TM30-C1EC-10]</div>
<div class="a" style="left:171px;top:1390px;width:519px;height:1.5px;background:#dfe4ec"></div>
<svg style="left:188.5px;top:1401px" width="12" height="20" viewBox="0 0 12 20" ><rect x="0.75" y="0.75" width="10" height="18" rx="1.8" fill="none" stroke="#444" stroke-width="1.5"/><path d="M3.3 4h1.8M6.3 4h1.8M3.3 7h1.8M6.3 7h1.8M3.3 10h1.8M6.3 10h1.8M3.3 13h1.8M6.3 13h1.8M3.3 16h1.8M6.3 16h1.8" stroke="#444" stroke-width="1"/></svg>
<div class="t" style="left:212.6px;top:1403.0px;font-size:19.5px;color:#1f1f1f;letter-spacing:-0.15px;transform:scaleY(1.08);transform-origin:0 85%">1 TM30-DQ16-PP-10_1[TM30-DQ16-PP-10]</div>
<div class="a" style="left:171px;top:1428px;width:519px;height:1.5px;background:#dfe4ec"></div>
<svg style="left:188.5px;top:1439px" width="12" height="20" viewBox="0 0 12 20" ><rect x="0.75" y="0.75" width="10" height="18" rx="1.8" fill="none" stroke="#444" stroke-width="1.5"/><path d="M3.3 4h1.8M6.3 4h1.8M3.3 7h1.8M6.3 7h1.8M3.3 10h1.8M6.3 10h1.8M3.3 13h1.8M6.3 13h1.8M3.3 16h1.8M6.3 16h1.8" stroke="#444" stroke-width="1"/></svg>
<div class="t" style="left:212.6px;top:1441.0px;font-size:19.5px;color:#1f1f1f;letter-spacing:-0.15px;transform:scaleY(1.08);transform-origin:0 85%">2 TM30-DQ16-PP-10_2[TM30-DQ16-PP-10]</div>
<div class="a" style="left:171px;top:1466px;width:519px;height:1.5px;background:#dfe4ec"></div>
<svg style="left:188.5px;top:1477px" width="12" height="20" viewBox="0 0 12 20" ><rect x="0.75" y="0.75" width="10" height="18" rx="1.8" fill="none" stroke="#444" stroke-width="1.5"/><path d="M3.3 4h1.8M6.3 4h1.8M3.3 7h1.8M6.3 7h1.8M3.3 10h1.8M6.3 10h1.8M3.3 13h1.8M6.3 13h1.8M3.3 16h1.8M6.3 16h1.8" stroke="#444" stroke-width="1"/></svg>
<div class="t" style="left:212.6px;top:1479.0px;font-size:19.5px;color:#1f1f1f;letter-spacing:-0.15px;transform:scaleY(1.08);transform-origin:0 85%">3 TM30-DQ16-PP-10_3[TM30-DQ16-PP-10]</div>
<div class="a" style="left:171px;top:1504px;width:519px;height:1.5px;background:#dfe4ec"></div>
<svg style="left:188.5px;top:1515px" width="12" height="20" viewBox="0 0 12 20" ><rect x="0.75" y="0.75" width="10" height="18" rx="1.8" fill="none" stroke="#444" stroke-width="1.5"/><path d="M3.3 4h1.8M6.3 4h1.8M3.3 7h1.8M6.3 7h1.8M3.3 10h1.8M6.3 10h1.8M3.3 13h1.8M6.3 13h1.8M3.3 16h1.8M6.3 16h1.8" stroke="#444" stroke-width="1"/></svg>
<div class="t" style="left:212.6px;top:1517.0px;font-size:19.5px;color:#1f1f1f;letter-spacing:-0.15px;transform:scaleY(1.08);transform-origin:0 85%">4 TM30-DI16-PP-10_1[TM30-DI16-PP-10]</div>
<div class="a" style="left:171px;top:1542px;width:519px;height:1.5px;background:#dfe4ec"></div>
<svg style="left:188.5px;top:1553px" width="12" height="20" viewBox="0 0 12 20" ><rect x="0.75" y="0.75" width="10" height="18" rx="1.8" fill="none" stroke="#444" stroke-width="1.5"/><path d="M3.3 4h1.8M6.3 4h1.8M3.3 7h1.8M6.3 7h1.8M3.3 10h1.8M6.3 10h1.8M3.3 13h1.8M6.3 13h1.8M3.3 16h1.8M6.3 16h1.8" stroke="#444" stroke-width="1"/></svg>
<div class="t" style="left:212.6px;top:1555.0px;font-size:19.5px;color:#1f1f1f;letter-spacing:-0.15px;transform:scaleY(1.08);transform-origin:0 85%">5 TM30-DI16-PP-10_2[TM30-DI16-PP-10]</div>
<div class="a" style="left:171px;top:1580px;width:519px;height:1.5px;background:#dfe4ec"></div>
<svg style="left:188.5px;top:1591px" width="12" height="20" viewBox="0 0 12 20" ><rect x="0.75" y="0.75" width="10" height="18" rx="1.8" fill="none" stroke="#444" stroke-width="1.5"/><path d="M3.3 4h1.8M6.3 4h1.8M3.3 7h1.8M6.3 7h1.8M3.3 10h1.8M6.3 10h1.8M3.3 13h1.8M6.3 13h1.8M3.3 16h1.8M6.3 16h1.8" stroke="#444" stroke-width="1"/></svg>
<div class="t" style="left:212.6px;top:1593.0px;font-size:19.5px;color:#1f1f1f;letter-spacing:-0.15px;transform:scaleY(1.08);transform-origin:0 85%">6 TM30-DI16-PP-10_3[TM30-DI16-PP-10]</div>
<div class="a" style="left:171px;top:1618px;width:519px;height:1.5px;background:#dfe4ec"></div>
<div class="t" style="left:487px;top:844.0px;font-size:19.5px;color:#9a9a9a;">1.0</div>
<div class="a" style="left:701px;top:84px;width:1856px;height:1822px;background:#ffffff;"></div>
<div class="a" style="left:701px;top:84px;width:1856px;height:40px;background:#dce9fc;"></div>
<div class="a" style="left:699px;top:120px;width:190px;height:3.5px;background:#4e90f8;"></div>
<svg style="left:718px;top:93.5px" width="21" height="21" viewBox="0 0 21 21" ><path d="M6.5 2.2H17" fill="none" stroke="#222" stroke-width="1.8"/><path d="M6.5 2.2Q1 2.2 1 8.2Q1 11 3.2 12.8" fill="none" stroke="#222" stroke-width="1.8"/><path d="M15.8 -1.8L20.5 2.2L15.8 6.2Z" fill="#222"/><path d="M4.5 17H14.5Q20 17 20 11Q20 8.2 17.8 6.5" fill="none" stroke="#222" stroke-width="1.8"/><path d="M5.2 13L0.5 17L5.2 21Z" fill="#222"/><path d="M9.5 3V6.2L14 11.5" fill="none" stroke="#222" stroke-width="1.6"/></svg>
<div class="t" style="left:754.5px;top:95px;font-size:20.5px;color:#1a1a1a;letter-spacing:-0.15px;transform:scaleY(1.08);transform-origin:0 85%">Cycle_1</div>
<svg style="left:864px;top:97px" width="10" height="9" viewBox="0 0 10 9" ><path d="M0.5 0.5L9.5 8.5M9.5 0.5L0.5 8.5" stroke="#333" stroke-width="1.3"/></svg>
<div class="a" style="left:701px;top:124px;width:1854px;height:173px;background:#ffffff;"></div>
<svg style="left:1914.5px;top:139px" width="28" height="27" viewBox="0 0 28 27" ><rect x="1" y="1" width="26" height="25" rx="2" fill="none" stroke="#2a6fe0" stroke-width="1.8" stroke-dasharray="3.2 2.2"/></svg>
<div class="t" style="left:1919.5px;top:144.5px;font-size:14.5px;color:#2c3a8a;">ns</div>
<div class="a" style="left:1966px;top:144px;width:1.5px;height:17px;background:#d0d8e4;"></div>
<div class="a" style="left:1983.5px;top:133px;width:122px;height:38.5px;border:1.5px solid #b7d0f7;border-radius:4px;background:#f5f9ff;overflow:hidden"><svg style="left:10px;top:8px" width="21" height="21"><path d="M10.5 1V20M1 10.5H20" stroke="#2a7af6" stroke-width="2.6"/></svg><div class="t" style="left:39.5px;top:10px;font-size:20.5px;color:#2a7af6">添加调用</div></div>
<div class="a" style="left:2122px;top:133px;width:122px;height:38.5px;border:1.5px solid #dadada;border-radius:4px;background:#f5f5f5;overflow:hidden"><svg style="left:10px;top:8px" width="21" height="21"><path d="M1 10.5H20" stroke="#c8c8c8" stroke-width="2.4"/></svg><div class="t" style="left:39.5px;top:10px;font-size:20.5px;color:#c4c4c4">移除调用</div></div>
<div class="a" style="left:2260.5px;top:133px;width:122px;height:38.5px;border:1.5px solid #dadada;border-radius:4px;background:#f5f5f5;overflow:hidden"><svg style="left:10px;top:8px" width="21" height="21"><path d="M10.5 2V21M2 10.5L10.5 2L19 10.5" fill="none" stroke="#c8c8c8" stroke-width="2"/></svg><div class="t" style="left:62px;top:10px;font-size:20.5px;color:#c4c4c4">上移</div></div>
<div class="a" style="left:2399.5px;top:133px;width:122px;height:38.5px;border:1.5px solid #dadada;border-radius:4px;background:#f5f5f5;overflow:hidden"><svg style="left:10px;top:8px" width="21" height="21"><path d="M10.5 0V19M2 10.5L10.5 19L19 10.5" fill="none" stroke="#c8c8c8" stroke-width="2"/></svg><div class="t" style="left:62px;top:10px;font-size:20.5px;color:#c4c4c4">下移</div></div>
<div class="a" style="left:701px;top:181px;width:1847px;height:40px;background:#f3f7fe;"></div>
<div class="a" style="left:701px;top:221px;width:1847px;height:14px;background:linear-gradient(rgba(0,0,0,0.12),rgba(0,0,0,0));"></div>
<div class="a" style="left:782px;top:181px;width:1.5px;height:80px;background:#d6e4fb;"></div>
<div class="a" style="left:899px;top:181px;width:1.5px;height:80px;background:#d6e4fb;"></div>
<div class="a" style="left:1398px;top:181px;width:1.5px;height:80px;background:#d6e4fb;"></div>
<div class="a" style="left:2397px;top:181px;width:1.5px;height:80px;background:#d6e4fb;"></div>
<svg style="left:799px;top:191px" width="20" height="20" viewBox="0 0 20 20" ><rect x="0" y="0" width="20" height="20" rx="4" fill="#2a7af6"/><path d="M4.5 10.2L8.5 14L15.5 6" fill="none" stroke="#fff" stroke-width="2"/></svg>
<svg style="left:799px;top:231px" width="20" height="20" viewBox="0 0 20 20" ><rect x="0" y="0" width="20" height="20" rx="4" fill="#2a7af6"/><path d="M4.5 10.2L8.5 14L15.5 6" fill="none" stroke="#fff" stroke-width="2"/></svg>
<div class="t" style="left:836px;top:192.5px;font-size:20.5px;color:#1a1a1a;">使能</div>
<div class="t" style="left:917px;top:192.5px;font-size:20.5px;color:#1a1a1a;">PRG名称</div>
<div class="t" style="left:1416.5px;top:192.5px;font-size:20.5px;color:#1a1a1a;">路径</div>
<div class="t" style="left:2415px;top:192.5px;font-size:20.5px;color:#1a1a1a;">注释</div>
<div class="t" style="left:756px;top:232px;font-size:20.5px;color:#1a1a1a;">1</div>
<div class="t" style="left:917px;top:232px;font-size:20.5px;color:#1a1a1a;">PU_1</div>
<div class="t" style="left:1416.5px;top:232px;font-size:20.5px;color:#1a1a1a;">程序单元</div>
<svg style="left:1354px;top:229px" width="29" height="23" viewBox="0 0 29 23" ><path d="M1 22Q3 8 16 7V1L28 11L16 21V14Q7 13 1 22Z" fill="#2159d6"/><path d="M1 22Q3 8 16 7V1L22 6Q6 8 1 22Z" fill="#3a3fa0"/></svg>
<div class="a" style="left:701px;top:292px;width:1681px;height:5px;background:#c8c8c8;border-radius:0 3px 3px 0"></div>
<div class="a" style="left:701px;top:297px;width:1856px;height:7px;background:#bcd5fa;"></div>
<div class="a" style="left:701px;top:304px;width:1854px;height:36px;background:#dce9fc;"></div>
<div class="a" style="left:699px;top:336.5px;width:167px;height:3.5px;background:#4e90f8;"></div>
<svg style="left:718px;top:316px" width="20" height="13" viewBox="0 0 20 13" ><polyline points="5,1.5 1,6.5 5,11.5" fill="none" stroke="#222" stroke-width="1.5"/><polyline points="15,1.5 19,6.5 15,11.5" fill="none" stroke="#222" stroke-width="1.5"/><path d="M11.5 0.5L8.5 12.5" stroke="#222" stroke-width="1.5"/></svg>
<div class="t" style="left:754.5px;top:310.5px;font-size:20.5px;color:#1a1a1a;letter-spacing:-0.15px;transform:scaleY(1.08);transform-origin:0 85%">PU_1</div>
<svg style="left:841px;top:313px" width="10" height="9" viewBox="0 0 10 9" ><path d="M0.5 0.5L9.5 8.5M9.5 0.5L0.5 8.5" stroke="#333" stroke-width="1.3"/></svg>
<div class="a" style="left:701px;top:340px;width:1854px;height:44px;background:#e8f0fd;"></div>
<div class="a" style="left:701px;top:384px;width:1854px;height:1px;background:#d0def4;"></div>
<div class="a" style="left:701px;top:385px;width:1854px;height:13px;background:#f7faff;"></div>
<div class="a" style="left:701px;top:398px;width:1854px;height:1.5px;background:#c5dbf8;"></div>
<svg style="left:724px;top:349px" width="27" height="27" viewBox="0 0 27 27" ><path d="M13.5 1V26M1 13.5H26" stroke="#c6c6c6" stroke-width="2.6"/></svg>
<svg style="left:783px;top:349px" width="22" height="27" viewBox="0 0 22 27" ><path d="M11 2V27M1.5 11.5L11 2L20.5 11.5" fill="none" stroke="#c6c6c6" stroke-width="2.8"/></svg>
<svg style="left:840px;top:349px" width="22" height="27" viewBox="0 0 22 27" ><path d="M11 0V25M1.5 15.5L11 25L20.5 15.5" fill="none" stroke="#c6c6c6" stroke-width="2.8"/></svg>
<svg style="left:894px;top:349px" width="27" height="27" viewBox="0 0 27 27" ><path d="M10 2H4Q1.5 2 1.5 4.5V22.5Q1.5 25.5 4.5 25.5H22.5Q25.5 25.5 25.5 22.5V16" fill="none" stroke="#0a5fe0" stroke-width="2.6"/><path d="M24 3Q15 3 12 12L9 9.5L9.5 19.5L19 17L16 14.5Q17 9 24 8Z" fill="#0a5fe0"/></svg>
<svg style="left:950px;top:349px" width="27" height="27" viewBox="0 0 27 27" ><path d="M12 2H4Q1.5 2 1.5 4.5V22.5Q1.5 25.5 4.5 25.5H22.5Q25.5 25.5 25.5 22.5V17" fill="none" stroke="#c6c6c6" stroke-width="2.6"/><path d="M7 19Q8 8 18 7.5V3L26 8.5L18 15V11Q11 11.5 7 19Z" fill="#c6c6c6"/></svg>
<svg style="left:1006px;top:349px" width="27" height="27" viewBox="0 0 27 27" ><path d="M20 6Q17 2.5 12.5 2.5Q2.5 2.5 2.5 13Q2.5 23 12 23.5" fill="none" stroke="#c6c6c6" stroke-width="2.2"/><path d="M17 1L22 6L16.5 8.5" fill="none" stroke="#c6c6c6" stroke-width="2"/><path d="M12 8.5V17" stroke="#c6c6c6" stroke-width="1.5"/><path d="M15 13L26 19.5L15 26Z" fill="#c6c6c6"/></svg>
<div class="a" style="left:1057px;top:352px;width:1.5px;height:20px;background:#c3cfdf;"></div>
<svg style="left:1080.5px;top:348.5px" width="28" height="28" viewBox="0 0 28 28" ><rect x="0" y="0" width="27" height="6.5" fill="#2a7af6"/><path d="M1.5 10V24M1.5 17H12M1 26.5H11" fill="none" stroke="#2a7af6" stroke-width="2"/><path d="M13 17.5L17 13" stroke="#2a7af6" stroke-width="1.8"/><path d="M20.5 12.5V26M14 19.5H27" stroke="#2a7af6" stroke-width="3.5"/></svg>
<svg style="left:1137.5px;top:348.5px" width="28" height="28" viewBox="0 0 28 28" ><rect x="0" y="0" width="27" height="6.5" fill="#2a7af6"/><rect x="0" y="10.5" width="27" height="6.5" fill="#2a7af6"/><rect x="0" y="21" width="27" height="6.5" fill="#2a7af6"/></svg>
<svg style="left:1194.5px;top:349.5px" width="26" height="27" viewBox="0 0 26 27" ><path d="M3 1H22Q24.5 1 24.5 3.5V16Q24.5 18.5 22 18.5H15.5L12.5 21.5L9.5 18.5H3Q1 18.5 1 16V3.5Q1 1 3 1Z" fill="none" stroke="#0a5fe0" stroke-width="2"/><circle cx="7.5" cy="9.8" r="1.5" fill="#0a5fe0"/><circle cx="12.8" cy="9.8" r="1.5" fill="#0a5fe0"/><circle cx="18" cy="9.8" r="1.5" fill="#0a5fe0"/><path d="M2 25.5H23.5" stroke="#0a5fe0" stroke-width="2.2"/></svg>
<svg style="left:1252.5px;top:348.5px" width="24" height="28" viewBox="0 0 24 28" ><path d="M3 1H20.5Q23 1 23 3.5V12.5Q23 15 20.5 15H14.5L11.8 18L9 15H3Q1 15 1 12.5V3.5Q1 1 3 1Z" fill="none" stroke="#0a5fe0" stroke-width="2"/><circle cx="6.8" cy="8" r="1.4" fill="#0a5fe0"/><circle cx="12" cy="8" r="1.4" fill="#0a5fe0"/><circle cx="17" cy="8" r="1.4" fill="#0a5fe0"/><text x="12" y="27" text-anchor="middle" font-family="Liberation Serif" font-style="italic" font-weight="bold" font-size="11" fill="#3a3fa0">(x)</text></svg>
<svg style="left:1308.5px;top:350px" width="26" height="25" viewBox="0 0 26 25" ><path d="M3 1.5H22.5Q25 1.5 25 4V17Q25 19.5 22.5 19.5H15L12 23L9 19.5H3Q1 19.5 1 17V4Q1 1.5 3 1.5Z" fill="none" stroke="#0a5fe0" stroke-width="2.2"/><path d="M6 16L11.5 5" stroke="#0a5fe0" stroke-width="2.2"/><text x="16.5" y="13" text-anchor="middle" font-family="Liberation Sans" font-weight="bold" font-size="12" fill="#0a5fe0">*</text></svg>
<svg style="left:1364.5px;top:350px" width="26" height="25" viewBox="0 0 26 25" ><path d="M16 19.5H15L12 23L9 19.5H3Q1 19.5 1 17V4Q1 1.5 3 1.5H22.5Q25 1.5 25 4V11" fill="none" stroke="#c6c6c6" stroke-width="2"/><path d="M6 16L11.5 5" stroke="#c6c6c6" stroke-width="2"/><text x="16.5" y="13" text-anchor="middle" font-family="Liberation Sans" font-size="12" fill="#c6c6c6">*</text><path d="M16 13.5L25 24M25 13.5L16 24" stroke="#c6c6c6" stroke-width="2"/></svg>
<div class="a" style="left:1414px;top:342px;width:38.5px;height:39px;background:#c4d8f8;border-radius:5px;box-shadow:inset 0 0 0 1px #b5cbec"></div>
<svg style="left:1420.5px;top:349.5px" width="28" height="27" viewBox="0 0 28 27" ><path d="M14 2L17.6 9.6L25.5 10.6L19.6 16.2L21.2 24.3L14 20.3L6.8 24.3L8.4 16.2L2.5 10.6L10.4 9.6Z" fill="none" stroke="#2a7af6" stroke-width="2.2" stroke-linejoin="round"/></svg>
<div class="a" style="left:1471px;top:352px;width:1.5px;height:20px;background:#c3cfdf;"></div>
<svg style="left:1495px;top:349px" width="27" height="27" viewBox="0 0 27 27" ><path d="M1 14V26H26V14" fill="none" stroke="#c6c6c6" stroke-width="1.6"/><path d="M11 1H16V9H21L13.5 18L6 9H11Z" fill="none" stroke="#c6c6c6" stroke-width="1.6"/><path d="M4.5 19.5v3.5M7.5 19.5v3.5M21 21.3a1.8 1.8 0 1 0 .1 0" fill="none" stroke="#c6c6c6" stroke-width="1.3"/></svg>
<svg style="left:1552px;top:354px" width="27" height="17" viewBox="0 0 27 17" ><circle cx="6.3" cy="10.5" r="5.3" fill="none" stroke="#c6c6c6" stroke-width="1.8"/><circle cx="20.7" cy="10.5" r="5.3" fill="none" stroke="#c6c6c6" stroke-width="1.8"/><path d="M3 6L5 1.5H10L11 6M16 6L17 1.5H22L24 6M11 8.5H16" fill="none" stroke="#c6c6c6" stroke-width="1.6"/></svg>
<div class="a" style="left:1601px;top:352px;width:1.5px;height:20px;background:#c3cfdf;"></div>
<svg style="left:1627px;top:351px" width="25" height="23" viewBox="0 0 25 23" ><rect x="2" y="1" width="21" height="21" rx="3" fill="none" stroke="#0a5fe0" stroke-width="2.3"/><path d="M0 11.5H25" stroke="#3a3fa0" stroke-width="2.5"/></svg>
<svg style="left:1683px;top:351px" width="25" height="23" viewBox="0 0 25 23" ><path d="M2.5 22V4Q2.5 1 5.5 1H19.5Q22.5 1 22.5 4V22" fill="none" stroke="#0a5fe0" stroke-width="2.3"/><path d="M0 21.8H25" stroke="#3a3fa0" stroke-width="2.5"/></svg>
<svg style="left:1740px;top:351px" width="25" height="23" viewBox="0 0 25 23" ><path d="M2.5 1V19Q2.5 22 5.5 22H19.5Q22.5 22 22.5 19V1" fill="none" stroke="#0a5fe0" stroke-width="2.3"/><path d="M0 1.2H25" stroke="#3a3fa0" stroke-width="2.5"/></svg>
<svg style="left:2508px;top:351px" width="23" height="23" viewBox="0 0 23 23" ><circle cx="9.5" cy="9.5" r="8.5" fill="none" stroke="#888" stroke-width="1.6"/><path d="M15.5 15.5L22 22" stroke="#888" stroke-width="1.6"/></svg>
<div class="a" style="left:701px;top:399.5px;width:1854px;height:40.5px;background:#e6effc;"></div>
<div class="a" style="left:701px;top:440px;width:1854px;height:1.5px;background:#d4d4d4;"></div>
<svg style="left:0;top:0" width="2557" height="1942" viewBox="0 0 2557 1942"><path d="M712 409.5V426.8M724 409.8L713.5 418.2L724 426.5" fill="none" stroke="#7a7a7a" stroke-width="2.3"/><path d="M761.5 410.2L753.5 418L761.5 425.8" fill="none" stroke="#7a7a7a" stroke-width="2.3"/><rect x="788.3" y="407.2" width="18.8" height="21.2" fill="none" stroke="#1e1e1e" stroke-width="1.7"/><path d="M784 412.6H788.3M784 420.8H788.3M807 412.6H811M794 411.5H801M797.5 411.5V425.3M794 425.3H801" fill="none" stroke="#1e1e1e" stroke-width="1.6"/><path d="M833 404V420H847M842 414L848 420L842 426" fill="none" stroke="#1e1e1e" stroke-width="2.3"/><path d="M870 425H887.5V411M879.5 418.5L887.5 410.8L895 418.5" fill="none" stroke="#1e1e1e" stroke-width="2.3"/><path d="M914 414H918.5V424H923.5V417M927 417V425.5M930.5 418V425.5H932.5V414H937.5" fill="none" stroke="#1e1e1e" stroke-width="2"/><path d="M957.5 416.8H967M974.5 416.8H983.5M967.5 406.8V429M974 406.8V429" fill="none" stroke="#1e1e1e" stroke-width="2.4"/><path d="M1000.2 416.8H1008M1019.5 416.8H1027M1008 406.5V428.8M1019.3 406.5V428.8M1016.4 409.4L1011 426.5" fill="none" stroke="#1e1e1e" stroke-width="2.3"/><text x="1057" y="415.6" text-anchor="middle" font-family="Liberation Sans" font-weight="bold" font-size="10.8" fill="#1e1e1e">NOT</text><path d="M1043.3 423.4H1049.4M1064.5 423.4H1070.5M1049.4 418V431M1064.5 418V431" fill="none" stroke="#1e1e1e" stroke-width="2.3"/><path d="M1087.2 416.9H1093.5M1106 416.9H1112.9M1096.6 407Q1090.8 416.9 1096.6 428.8M1101.9 407Q1110.1 416.9 1101.9 428.8" fill="none" stroke="#1e1e1e" stroke-width="2.3"/><path d="M1130.4 416.9H1135.5M1152.5 416.9H1156.8M1140.5 407Q1129.9 416.9 1140.5 428.8M1148.7 407Q1156.7 416.9 1148.7 428.8M1148.3 407.5L1141.5 427" fill="none" stroke="#1e1e1e" stroke-width="2.3"/><path d="M2458 410.5L2466 418L2458 425.5M2493.5 410L2503 418L2493.5 426M2505.5 409V427" fill="none" stroke="#7a7a7a" stroke-width="2.2"/><path d="M2530 414.6H2547M2534.5 409.5L2529.5 414.6L2534.5 419.6M2529.5 423.3H2547.5M2542.5 418.3L2547.8 423.3L2542.5 428.5" fill="none" stroke="#1e1e1e" stroke-width="2.4"/></svg>
<div class="a" style="left:701px;top:441px;width:1854px;height:767px;background:#ffffff;"></div>
<div class="a" style="left:701px;top:441px;width:38px;height:245px;background:#f7faff;"></div>
<div class="a" style="left:738.5px;top:441px;width:1.5px;height:245px;background:#dbe7fa;"></div>
<div class="a" style="left:740px;top:441px;width:1794px;height:39px;background:#f6f6f6;"></div>
<div class="a" style="left:782px;top:444px;width:299px;height:32px;background:#f9f9f9;border-radius:6px;box-shadow:0 0 0 1px #efefef"></div>
<svg style="left:751.5px;top:456px" width="11.5" height="7" viewBox="0 0 11.5 7" ><polyline points="0.8,0.8 5.75,6.2 10.7,0.8" fill="none" stroke="#444" stroke-width="1.6"/></svg>
<div class="t" style="left:786px;top:448.5px;font-size:20.5px;color:#2f7cf6;">程序段&nbsp;&nbsp;1</div>
<div class="t" style="left:713px;top:553px;font-size:20px;color:#111;font-weight:bold">1</div>
<div class="a" style="left:821px;top:512px;width:3px;height:142px;background:#000;"></div>
<div class="a" style="left:824px;top:578px;width:315px;height:3px;background:#000;"></div>
<div class="a" style="left:1274px;top:578px;width:398px;height:3px;background:#000;"></div>
<div class="a" style="left:1672px;top:569px;width:3px;height:21px;background:#000;"></div>
<div class="a" style="left:1139px;top:533px;width:135px;height:121px;background:#f3f8ff;border:1.6px solid #b3d0fa"></div>
<div class="a" style="left:1140.6px;top:534.6px;width:131.8px;height:25.4px;background:#dfeafc;"></div>
<div class="t" style="left:1139px;top:537px;font-size:20px;color:#111;font-family:'Liberation Mono',monospace;-webkit-text-stroke:0.4px #111;width:135px;text-align:center">ROR</div>
<div class="t" style="left:1145px;top:570px;font-size:20px;color:#111;font-family:'Liberation Mono',monospace;-webkit-text-stroke:0.4px #111">EN</div>
<div class="a" style="left:1196px;top:578.5px;width:22px;height:2px;background:#222;"></div>
<div class="t" style="left:1234px;top:570px;font-size:20px;color:#111;font-family:'Liberation Mono',monospace;-webkit-text-stroke:0.4px #111">ENO</div>
<div class="t" style="left:1145px;top:598px;font-size:20px;color:#111;font-family:'Liberation Mono',monospace;-webkit-text-stroke:0.4px #111">IN</div>
<div class="t" style="left:1145px;top:625px;font-size:20px;color:#111;font-family:'Liberation Mono',monospace;-webkit-text-stroke:0.4px #111">N</div>
<div class="a" style="left:1097px;top:602.5px;width:42px;height:2.5px;background:#94bdf8;"></div>
<div class="a" style="left:1097px;top:629.5px;width:42px;height:2.5px;background:#94bdf8;"></div>
<div class="a" style="left:1274px;top:602.5px;width:43px;height:2.5px;background:#94bdf8;"></div>
<div class="t" style="left:1068px;top:597px;font-size:20px;color:#111;font-family:'Liberation Mono',monospace;-webkit-text-stroke:0.4px #111;width:24px;text-align:right">aa</div>
<div class="t" style="left:1080px;top:625px;font-size:20px;color:#111;font-family:'Liberation Mono',monospace;-webkit-text-stroke:0.4px #111">1</div>
<div class="t" style="left:1322px;top:597px;font-size:20px;color:#111;font-family:'Liberation Mono',monospace;-webkit-text-stroke:0.4px #111">aa</div>
<div class="a" style="left:701px;top:686px;width:1833px;height:1.5px;background:#c8c8c8;"></div>
<div class="a" style="left:701px;top:687px;width:38px;height:245px;background:#e8e8e8;"></div>
<div class="a" style="left:738.5px;top:687px;width:1.5px;height:245px;background:#dbe7fa;"></div>
<div class="a" style="left:740px;top:687px;width:1794px;height:39px;background:#f6f6f6;"></div>
<div class="a" style="left:782px;top:690px;width:299px;height:32px;background:#f9f9f9;border-radius:6px;box-shadow:0 0 0 1px #efefef"></div>
<svg style="left:751.5px;top:702px" width="11.5" height="7" viewBox="0 0 11.5 7" ><polyline points="0.8,0.8 5.75,6.2 10.7,0.8" fill="none" stroke="#444" stroke-width="1.6"/></svg>
<div class="t" style="left:786px;top:694.5px;font-size:20.5px;color:#2f7cf6;font-weight:bold">程序段&nbsp;&nbsp;2</div>
<div class="t" style="left:713px;top:799px;font-size:20px;color:#111;font-weight:bold">2</div>
<div class="a" style="left:755.5px;top:742.5px;width:936px;height:174px;background:transparent;border:2px solid #dde9fb"></div>
<div class="a" style="left:821px;top:758px;width:3px;height:142px;background:#000;"></div>
<div class="a" style="left:824px;top:824px;width:315px;height:3px;background:#000;"></div>
<div class="a" style="left:1274px;top:824px;width:398px;height:3px;background:#000;"></div>
<div class="a" style="left:1672px;top:815px;width:3px;height:21px;background:#000;"></div>
<div class="a" style="left:1139px;top:779px;width:135px;height:121px;background:#f3f8ff;border:1.6px solid #b3d0fa"></div>
<div class="a" style="left:1140.6px;top:780.6px;width:131.8px;height:25.4px;background:#dfeafc;"></div>
<div class="t" style="left:1139px;top:783px;font-size:20px;color:#111;font-family:'Liberation Mono',monospace;-webkit-text-stroke:0.4px #111;width:135px;text-align:center">ROR</div>
<div class="t" style="left:1145px;top:816px;font-size:20px;color:#111;font-family:'Liberation Mono',monospace;-webkit-text-stroke:0.4px #111">EN</div>
<div class="a" style="left:1196px;top:824.5px;width:22px;height:2px;background:#222;"></div>
<div class="t" style="left:1234px;top:816px;font-size:20px;color:#111;font-family:'Liberation Mono',monospace;-webkit-text-stroke:0.4px #111">ENO</div>
<div class="t" style="left:1145px;top:844px;font-size:20px;color:#111;font-family:'Liberation Mono',monospace;-webkit-text-stroke:0.4px #111">IN</div>
<div class="t" style="left:1145px;top:871px;font-size:20px;color:#111;font-family:'Liberation Mono',monospace;-webkit-text-stroke:0.4px #111">N</div>
<div class="a" style="left:1097px;top:848.5px;width:42px;height:2.5px;background:#94bdf8;"></div>
<div class="a" style="left:1097px;top:875.5px;width:42px;height:2.5px;background:#94bdf8;"></div>
<div class="a" style="left:1274px;top:848.5px;width:43px;height:2.5px;background:#94bdf8;"></div>
<div class="t" style="left:1068px;top:843px;font-size:20px;color:#111;font-family:'Liberation Mono',monospace;-webkit-text-stroke:0.4px #111;width:24px;text-align:right">bb</div>
<div class="t" style="left:1080px;top:871px;font-size:20px;color:#111;font-family:'Liberation Mono',monospace;-webkit-text-stroke:0.4px #111">2</div>
<div class="t" style="left:1322px;top:843px;font-size:20px;color:#111;font-family:'Liberation Mono',monospace;-webkit-text-stroke:0.4px #111">bb</div>
<div class="a" style="left:701px;top:932px;width:1833px;height:1.5px;background:#c8c8c8;"></div>
<div class="a" style="left:701px;top:933px;width:38px;height:245px;background:#f7faff;"></div>
<div class="a" style="left:738.5px;top:933px;width:1.5px;height:245px;background:#dbe7fa;"></div>
<div class="a" style="left:740px;top:933px;width:1794px;height:39px;background:#f6f6f6;"></div>
<div class="a" style="left:782px;top:936px;width:299px;height:32px;background:#f9f9f9;border-radius:6px;box-shadow:0 0 0 1px #efefef"></div>
<svg style="left:751.5px;top:948px" width="11.5" height="7" viewBox="0 0 11.5 7" ><polyline points="0.8,0.8 5.75,6.2 10.7,0.8" fill="none" stroke="#444" stroke-width="1.6"/></svg>
<div class="t" style="left:786px;top:940.5px;font-size:20.5px;color:#2f7cf6;">程序段&nbsp;&nbsp;3</div>
<div class="t" style="left:713px;top:1045px;font-size:20px;color:#111;font-weight:bold">3</div>
<div class="a" style="left:821px;top:1004px;width:3px;height:142px;background:#000;"></div>
<div class="a" style="left:824px;top:1070px;width:315px;height:3px;background:#000;"></div>
<div class="a" style="left:1274px;top:1070px;width:398px;height:3px;background:#000;"></div>
<div class="a" style="left:1672px;top:1061px;width:3px;height:21px;background:#000;"></div>
<div class="a" style="left:1139px;top:1025px;width:135px;height:121px;background:#f3f8ff;border:1.6px solid #b3d0fa"></div>
<div class="a" style="left:1140.6px;top:1026.6px;width:131.8px;height:25.4px;background:#dfeafc;"></div>
<div class="t" style="left:1139px;top:1029px;font-size:20px;color:#111;font-family:'Liberation Mono',monospace;-webkit-text-stroke:0.4px #111;width:135px;text-align:center">ROR</div>
<div class="t" style="left:1145px;top:1062px;font-size:20px;color:#111;font-family:'Liberation Mono',monospace;-webkit-text-stroke:0.4px #111">EN</div>
<div class="a" style="left:1196px;top:1070.5px;width:22px;height:2px;background:#222;"></div>
<div class="t" style="left:1234px;top:1062px;font-size:20px;color:#111;font-family:'Liberation Mono',monospace;-webkit-text-stroke:0.4px #111">ENO</div>
<div class="t" style="left:1145px;top:1090px;font-size:20px;color:#111;font-family:'Liberation Mono',monospace;-webkit-text-stroke:0.4px #111">IN</div>
<div class="t" style="left:1145px;top:1117px;font-size:20px;color:#111;font-family:'Liberation Mono',monospace;-webkit-text-stroke:0.4px #111">N</div>
<div class="a" style="left:1097px;top:1094.5px;width:42px;height:2.5px;background:#94bdf8;"></div>
<div class="a" style="left:1097px;top:1121.5px;width:42px;height:2.5px;background:#94bdf8;"></div>
<div class="a" style="left:1274px;top:1094.5px;width:43px;height:2.5px;background:#94bdf8;"></div>
<div class="t" style="left:1068px;top:1089px;font-size:20px;color:#111;font-family:'Liberation Mono',monospace;-webkit-text-stroke:0.4px #111;width:24px;text-align:right">cc</div>
<div class="t" style="left:1080px;top:1117px;font-size:20px;color:#111;font-family:'Liberation Mono',monospace;-webkit-text-stroke:0.4px #111">3</div>
<div class="t" style="left:1322px;top:1089px;font-size:20px;color:#111;font-family:'Liberation Mono',monospace;-webkit-text-stroke:0.4px #111">cc</div>
<div class="a" style="left:701px;top:1178px;width:1833px;height:1.5px;background:#c8c8c8;"></div>
<div class="a" style="left:2534px;top:441px;width:1.2px;height:767px;background:#dddddd;"></div>
<div class="a" style="left:701px;top:1208px;width:1854px;height:44px;background:#f9f9f9;"></div>
<div class="a" style="left:701px;top:1252px;width:1854px;height:6px;background:#bcd5fa;"></div>
<div class="a" style="left:701px;top:1258px;width:1854px;height:37px;background:#dce9fc;"></div>
<div class="a" style="left:699px;top:1291.5px;width:177px;height:3.5px;background:#4e90f8;"></div>
<svg style="left:718px;top:1266px" width="20" height="20" viewBox="0 0 20 20" ><path d="M10.5 19.6H2.5Q0.9 19.6 0.9 18V2.5Q0.9 0.9 2.5 0.9H16.6Q18.2 0.9 18.2 2.5V6.6" fill="none" stroke="#222" stroke-width="1.7"/><circle cx="4.3" cy="5.6" r="0.95" fill="#222"/><circle cx="4.3" cy="9.6" r="0.95" fill="#222"/><circle cx="4.3" cy="13.4" r="0.95" fill="#222"/><path d="M6.6 5.6H15.6M6.6 9.6H10.6M6.6 13.4H9.4" stroke="#222" stroke-width="1.6"/><path d="M11.3 10.2Q14 9 14.9 11.8L16.7 17.3Q17.4 19.6 20.2 19.1" fill="none" stroke="#222" stroke-width="2.1"/><path d="M20.3 10L12.6 19.7" stroke="#222" stroke-width="1.6"/></svg>
<div class="t" style="left:754.5px;top:1267px;font-size:20.5px;color:#1a1a1a;letter-spacing:-0.15px;transform:scaleY(1.08);transform-origin:0 85%">GVS_1</div>
<svg style="left:851px;top:1267px" width="10" height="9" viewBox="0 0 10 9" ><path d="M0.5 0.5L9.5 8.5M9.5 0.5L0.5 8.5" stroke="#333" stroke-width="1.3"/></svg>
<div class="a" style="left:701px;top:1295px;width:1854px;height:43px;background:#e8f0fd;"></div>
<svg style="left:724px;top:1303px" width="27" height="27" viewBox="0 0 27 27" ><path d="M13.5 1V26M1 13.5H26" stroke="#0a5fe0" stroke-width="3.2"/></svg>
<svg style="left:783px;top:1303px" width="22" height="27" viewBox="0 0 22 27" ><path d="M11 2V27M1.5 11.5L11 2L20.5 11.5" fill="none" stroke="#c6c6c6" stroke-width="2.8"/></svg>
<svg style="left:840px;top:1303px" width="22" height="27" viewBox="0 0 22 27" ><path d="M11 0V25M1.5 15.5L11 25L20.5 15.5" fill="none" stroke="#c6c6c6" stroke-width="2.8"/></svg>
<svg style="left:894px;top:1303px" width="27" height="27" viewBox="0 0 27 27" ><path d="M10 2H4Q1.5 2 1.5 4.5V22.5Q1.5 25.5 4.5 25.5H22.5Q25.5 25.5 25.5 22.5V16" fill="none" stroke="#0a5fe0" stroke-width="2.6"/><path d="M24 3Q15 3 12 12L9 9.5L9.5 19.5L19 17L16 14.5Q17 9 24 8Z" fill="#0a5fe0"/></svg>
<svg style="left:950px;top:1303px" width="27" height="27" viewBox="0 0 27 27" ><path d="M12 2H4Q1.5 2 1.5 4.5V22.5Q1.5 25.5 4.5 25.5H22.5Q25.5 25.5 25.5 22.5V17" fill="none" stroke="#0a5fe0" stroke-width="2.6"/><path d="M7 19Q8 8 18 7.5V3L26 8.5L18 15V11Q11 11.5 7 19Z" fill="#0a5fe0"/></svg>
<svg style="left:1006px;top:1303px" width="27" height="27" viewBox="0 0 27 27" ><path d="M20 6Q17 2.5 12.5 2.5Q2.5 2.5 2.5 13Q2.5 23 12 23.5" fill="none" stroke="#c6c6c6" stroke-width="2.2"/><path d="M17 1L22 6L16.5 8.5" fill="none" stroke="#c6c6c6" stroke-width="2"/><path d="M12 8.5V17" stroke="#c6c6c6" stroke-width="1.5"/><path d="M15 13L26 19.5L15 26Z" fill="#c6c6c6"/></svg>
<div class="a" style="left:1057px;top:1306px;width:1.5px;height:20px;background:#c3cfdf;"></div>
<svg style="left:1081px;top:1307px" width="27" height="17" viewBox="0 0 27 17" ><circle cx="6.3" cy="10.5" r="5.3" fill="none" stroke="#0a5fe0" stroke-width="1.8"/><circle cx="20.7" cy="10.5" r="5.3" fill="none" stroke="#0a5fe0" stroke-width="1.8"/><path d="M3 6L5 1.5H10L11 6M16 6L17 1.5H22L24 6M11 8.5H16" fill="none" stroke="#0a5fe0" stroke-width="1.6"/></svg>
<svg style="left:2507px;top:1305px" width="23" height="23" viewBox="0 0 23 23" ><circle cx="9.5" cy="9.5" r="8.5" fill="none" stroke="#888" stroke-width="1.6"/><path d="M15.5 15.5L22 22" stroke="#888" stroke-width="1.6"/></svg>
<div class="a" style="left:701px;top:1338px;width:1847px;height:40px;background:#f3f7fe;"></div>
<div class="a" style="left:1116px;top:1338px;width:266px;height:40px;background:#dbe8fc;"></div>
<svg style="left:748px;top:1343px" width="29" height="29" viewBox="0 0 29 29" ><path d="M29 0V29H0Z" fill="#c9dcf8"/></svg>
<div class="a" style="left:701px;top:1378px;width:1847px;height:40px;background:#ffffff;"></div>
<div class="a" style="left:701px;top:1418px;width:1847px;height:40px;background:#f7faff;"></div>
<div class="a" style="left:701px;top:1458px;width:1847px;height:40px;background:#ffffff;"></div>
<div class="a" style="left:701px;top:1498px;width:1847px;height:40px;background:#f7faff;"></div>
<div class="a" style="left:701px;top:1538px;width:1847px;height:40px;background:#ffffff;"></div>
<div class="a" style="left:701px;top:1578px;width:1847px;height:40px;background:#f7faff;"></div>
<div class="a" style="left:701px;top:1618px;width:1847px;height:40px;background:#ffffff;"></div>
<div class="a" style="left:701px;top:1618px;width:81.5px;height:40px;background:#dde9fb;"></div>
<div class="a" style="left:701px;top:1378px;width:1847px;height:14px;background:linear-gradient(rgba(0,0,0,0.12),rgba(0,0,0,0));"></div>
<div class="a" style="left:782px;top:1338px;width:1.5px;height:320px;background:#dbe7fa;"></div>
<div class="a" style="left:1115px;top:1338px;width:1.5px;height:320px;background:#dbe7fa;"></div>
<div class="a" style="left:1382px;top:1338px;width:1.5px;height:320px;background:#dbe7fa;"></div>
<div class="a" style="left:1648px;top:1338px;width:1.5px;height:320px;background:#dbe7fa;"></div>
<div class="a" style="left:1741.5px;top:1338px;width:1.5px;height:320px;background:#dbe7fa;"></div>
<div class="a" style="left:1908px;top:1338px;width:1.5px;height:320px;background:#dbe7fa;"></div>
<div class="a" style="left:1115px;top:1618px;width:268px;height:40px;background:#d4e3fc;border:2px solid #3b82f6"></div>
<div class="t" style="left:833.5px;top:1350.5px;font-size:20.5px;color:#1a1a1a;">名称</div>
<div class="t" style="left:1132px;top:1350.5px;font-size:20.5px;color:#1a1a1a;">数据类型</div>
<div class="t" style="left:1398.5px;top:1350.5px;font-size:20.5px;color:#1a1a1a;">初始值</div>
<div class="t" style="left:1665px;top:1350.5px;font-size:20.5px;color:#1a1a1a;">保持</div>
<div class="t" style="left:1758px;top:1350.5px;font-size:20.5px;color:#1a1a1a;">地址</div>
<div class="t" style="left:1925px;top:1350.5px;font-size:20.5px;color:#1a1a1a;">注释</div>
<svg style="left:802.5px;top:1394.5px" width="12.5" height="7" viewBox="0 0 12.5 7" ><polyline points="0.8,0.8 6.25,6.2 11.7,0.8" fill="none" stroke="#2a7af6" stroke-width="1.8"/></svg>
<div class="t" style="left:833.5px;top:1389px;font-size:20px;color:#2f7cf6;letter-spacing:-0.9px;transform:scaleY(1.08);transform-origin:0 80%">GLOBAL VARIABLE</div>
<div class="t" style="left:755px;top:1429px;font-size:20.5px;color:#1a1a1a;">1</div>
<div class="a" style="left:833px;top:1435px;width:6px;height:6px;border-radius:50%;background:#8ab4f8"></div>
<div class="t" style="left:863px;top:1430px;font-size:20.5px;color:#1a1a1a;transform:scaleY(1.12);transform-origin:0 80%">aa</div>
<div class="t" style="left:1132px;top:1430px;font-size:20.5px;color:#1a1a1a;transform:scaleY(1.12);transform-origin:0 80%">WORD</div>
<div class="t" style="left:1402.5px;top:1430px;font-size:20.5px;color:#1a1a1a;transform:scaleY(1.12);transform-origin:0 80%">11</div>
<svg style="left:1684px;top:1428px" width="21" height="21" viewBox="0 0 21 21" ><rect x="0.8" y="0.8" width="19.4" height="19.4" rx="4" fill="#fff" stroke="#3a82f5" stroke-width="1.5"/></svg>
<div class="t" style="left:1758px;top:1430px;font-size:20px;color:#8a8a8a;transform:scaleY(1.12);transform-origin:0 80%">%QW10</div>
<svg style="left:2509px;top:1428px" width="22" height="21" viewBox="0 0 22 21" ><path d="M3 16.5L14.5 4.5Q16 3 17.5 4.5Q19 6 17.5 7.5L6 19L2 19.5Z" fill="none" stroke="#777" stroke-width="1.5"/><path d="M1 20.5H21" stroke="#777" stroke-width="1.5"/></svg>
<div class="t" style="left:755px;top:1469px;font-size:20.5px;color:#1a1a1a;">2</div>
<div class="a" style="left:833px;top:1475px;width:6px;height:6px;border-radius:50%;background:#8ab4f8"></div>
<div class="t" style="left:863px;top:1470px;font-size:20.5px;color:#1a1a1a;transform:scaleY(1.12);transform-origin:0 80%">bb</div>
<div class="t" style="left:1132px;top:1470px;font-size:20.5px;color:#1a1a1a;transform:scaleY(1.12);transform-origin:0 80%">WORD</div>
<div class="t" style="left:1402.5px;top:1470px;font-size:20.5px;color:#1a1a1a;transform:scaleY(1.12);transform-origin:0 80%">22</div>
<svg style="left:1684px;top:1468px" width="21" height="21" viewBox="0 0 21 21" ><rect x="0.8" y="0.8" width="19.4" height="19.4" rx="4" fill="#fff" stroke="#3a82f5" stroke-width="1.5"/></svg>
<div class="t" style="left:1758px;top:1470px;font-size:20px;color:#8a8a8a;transform:scaleY(1.12);transform-origin:0 80%">%QW12</div>
<svg style="left:2509px;top:1468px" width="22" height="21" viewBox="0 0 22 21" ><path d="M3 16.5L14.5 4.5Q16 3 17.5 4.5Q19 6 17.5 7.5L6 19L2 19.5Z" fill="none" stroke="#777" stroke-width="1.5"/><path d="M1 20.5H21" stroke="#777" stroke-width="1.5"/></svg>
<div class="t" style="left:755px;top:1509px;font-size:20.5px;color:#1a1a1a;">3</div>
<div class="a" style="left:833px;top:1515px;width:6px;height:6px;border-radius:50%;background:#8ab4f8"></div>
<div class="t" style="left:863px;top:1510px;font-size:20.5px;color:#1a1a1a;transform:scaleY(1.12);transform-origin:0 80%">cc</div>
<div class="t" style="left:1132px;top:1510px;font-size:20.5px;color:#1a1a1a;transform:scaleY(1.12);transform-origin:0 80%">WORD</div>
<div class="t" style="left:1402.5px;top:1510px;font-size:20.5px;color:#1a1a1a;transform:scaleY(1.12);transform-origin:0 80%">33</div>
<svg style="left:1684px;top:1508px" width="21" height="21" viewBox="0 0 21 21" ><rect x="0.8" y="0.8" width="19.4" height="19.4" rx="4" fill="#fff" stroke="#3a82f5" stroke-width="1.5"/></svg>
<div class="t" style="left:1758px;top:1510px;font-size:20px;color:#8a8a8a;transform:scaleY(1.12);transform-origin:0 80%">%QW14</div>
<svg style="left:2509px;top:1508px" width="22" height="21" viewBox="0 0 22 21" ><path d="M3 16.5L14.5 4.5Q16 3 17.5 4.5Q19 6 17.5 7.5L6 19L2 19.5Z" fill="none" stroke="#777" stroke-width="1.5"/><path d="M1 20.5H21" stroke="#777" stroke-width="1.5"/></svg>
<div class="t" style="left:755px;top:1549px;font-size:20.5px;color:#9a9a9a;">4</div>
<div class="a" style="left:833px;top:1555px;width:6px;height:6px;border-radius:50%;background:#8ab4f8"></div>
<div class="t" style="left:862.5px;top:1550px;font-size:22px;color:#bdbdbd;">添加</div>
<svg style="left:802.5px;top:1594.5px" width="12.5" height="7" viewBox="0 0 12.5 7" ><polyline points="0.8,0.8 6.25,6.2 11.7,0.8" fill="none" stroke="#2a7af6" stroke-width="1.8"/></svg>
<div class="t" style="left:833.5px;top:1589px;font-size:20px;color:#2f7cf6;letter-spacing:-0.9px;transform:scaleY(1.08);transform-origin:0 80%">GLOBAL CONSTANT</div>
<div class="t" style="left:755px;top:1629px;font-size:20.5px;color:#9a9a9a;">1</div>
<div class="a" style="left:833px;top:1635px;width:6px;height:6px;border-radius:50%;background:#8ab4f8"></div>
<div class="t" style="left:862.5px;top:1630px;font-size:22px;color:#bdbdbd;">添加</div>
<div class="a" style="left:701px;top:1897px;width:1842px;height:9px;background:#cbcbcb;border-radius:0 5px 5px 0"></div>
<div class="a" style="left:2555.6px;top:84px;width:1.4px;height:1822px;background:#6a6a6a;"></div>
<div class="t" style="left:1874px;top:235px;font-size:32.5px;color:#f51d1d;">任务调用<span style="letter-spacing:-3.2px">PU_1</span></div>
<div class="t" style="left:1870px;top:530px;font-size:32.5px;color:#f51d1d;">逻辑移动位</div>
<div class="t" style="left:1882px;top:1437px;font-size:32.5px;color:#f51d1d;">声明相关变量</div>
<div class="a" style="left:0;top:1906px;width:2557px;height:36px;background:#0078d0"></div>
<div class="a" style="left:37px;top:1916px;width:23px;height:23px;border-radius:50%;border:3px solid #22ff00;background:linear-gradient(#0078d0 50%,#22ff00 50%)"></div>
<div class="t mono" style="left:93px;top:1918.5px;font-size:19.5px;color:#fff;-webkit-text-stroke:0.5px #fff;transform:scaleY(1.1);transform-origin:0 80%">ClientID-8bf7546f-657f-4349-9ee2-2fbca7b1f4ac</div>
<svg style="left:2275px;top:1917px" width="20" height="17" viewBox="0 0 20 17" ><rect x="1" y="1" width="18" height="15" fill="none" stroke="#fff" stroke-width="1.8"/><path d="M1 5.5H19" stroke="#fff" stroke-width="1.8"/></svg>
<svg style="left:2326px;top:1909px" width="28" height="28" viewBox="0 0 28 28" ><rect x="13" y="0.8" width="13.5" height="20" fill="none" stroke="#fff" stroke-width="1.5"/><path d="M16.5 3v6M19.5 3v6M22 11h2.5M22 14h2.5M22 17h2.5" stroke="#fff" stroke-width="1.3"/><rect x="0.8" y="10.5" width="15" height="11" rx="1.5" fill="#0078d0" stroke="#fff" stroke-width="1.5"/><path d="M4 16L7 19L12.5 13" fill="none" stroke="#fff" stroke-width="1.6"/><path d="M8 22v3M3 26H14" stroke="#fff" stroke-width="2"/></svg>
<svg style="left:2372px;top:1921px" width="10" height="10" viewBox="0 0 10 10" ><path d="M1 1L9 9M9 1L1 9" stroke="#fff" stroke-width="2"/></svg>
<div class="t" style="left:2399px;top:1914px;font-size:21px;color:#fff;font-weight:bold">0</div>
<div class="a" style="left:2326px;top:1938.5px;width:86px;height:1.5px;background:#fff;"></div>
<div class="t" style="left:2440px;top:1914px;font-size:21px;color:#fff;">仿真</div>
<svg style="left:2498.5px;top:1921px" width="10" height="10" viewBox="0 0 10 10" ><path d="M1 1L9 9M9 1L1 9" stroke="#fff" stroke-width="2"/></svg>
<div class="t" style="left:2527px;top:1914px;font-size:21px;color:#fff;font-weight:bold">0</div>
<div class="a" style="left:2440px;top:1938.5px;width:99px;height:1.5px;background:#fff;"></div>
</body>
</html>
